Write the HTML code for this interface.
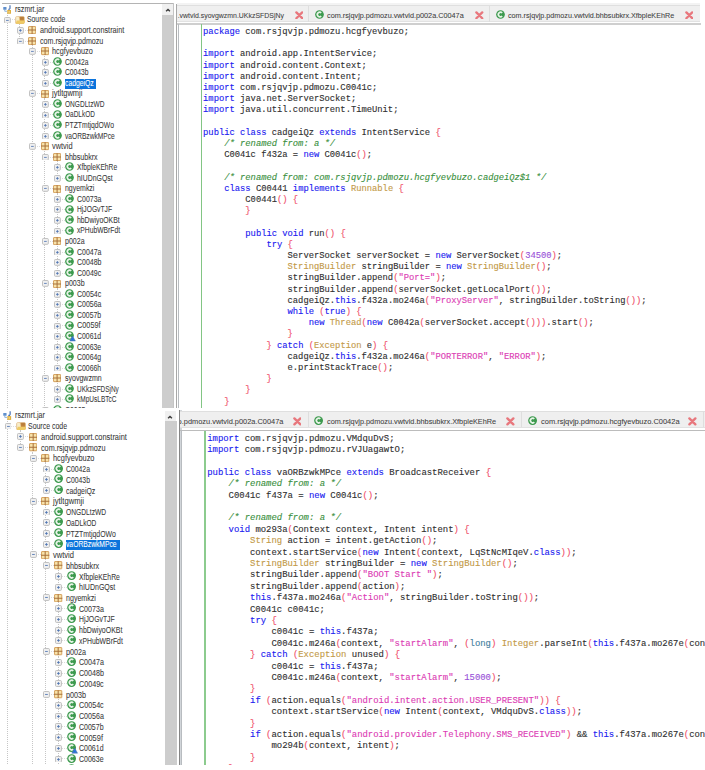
<!DOCTYPE html>
<html><head><meta charset="utf-8"><style>
html,body{margin:0;padding:0;background:#fff}
body{width:705px;height:770px;overflow:hidden;position:relative}
.tt{position:absolute;transform-origin:left;-webkit-text-stroke:0.06px currentColor;font-family:"Liberation Sans",sans-serif;white-space:pre;line-height:10px}
.cl{position:absolute;font-family:"Liberation Mono",monospace;white-space:pre;line-height:11px;color:#303030;-webkit-text-stroke:0.12px currentColor}
i{font-style:italic}
</style></head><body>
<div style="position:absolute;left:0;top:0;width:705px;height:408px;overflow:hidden">
<div style="position:absolute;left:2px;top:3px;width:171px;height:1px;background:#b4b4b4"></div>
<div style="position:absolute;left:6.80px;top:13.40px;width:0;height:1986.60px;border-left:1px dotted #c6c6c6"></div>
<div style="position:absolute;left:10.30px;top:19.45px;width:5.00px;height:0;border-top:1px dotted #dcdcdc"></div>
<div style="position:absolute;left:19.30px;top:23.95px;width:0;height:17.10px;border-left:1px dotted #c6c6c6"></div>
<div style="position:absolute;left:22.80px;top:30.00px;width:5.00px;height:0;border-top:1px dotted #dcdcdc"></div>
<div style="position:absolute;left:22.80px;top:40.55px;width:5.00px;height:0;border-top:1px dotted #dcdcdc"></div>
<div style="position:absolute;left:31.80px;top:45.05px;width:0;height:1954.95px;border-left:1px dotted #c6c6c6"></div>
<div style="position:absolute;left:35.30px;top:51.10px;width:5.00px;height:0;border-top:1px dotted #dcdcdc"></div>
<div style="position:absolute;left:44.30px;top:55.60px;width:0;height:27.65px;border-left:1px dotted #c6c6c6"></div>
<div style="position:absolute;left:47.80px;top:61.65px;width:5.00px;height:0;border-top:1px dotted #dcdcdc"></div>
<div style="position:absolute;left:47.80px;top:72.20px;width:5.00px;height:0;border-top:1px dotted #dcdcdc"></div>
<div style="position:absolute;left:47.80px;top:82.75px;width:5.00px;height:0;border-top:1px dotted #dcdcdc"></div>
<div style="position:absolute;left:35.30px;top:93.30px;width:5.00px;height:0;border-top:1px dotted #dcdcdc"></div>
<div style="position:absolute;left:44.30px;top:97.80px;width:0;height:38.20px;border-left:1px dotted #c6c6c6"></div>
<div style="position:absolute;left:47.80px;top:103.85px;width:5.00px;height:0;border-top:1px dotted #dcdcdc"></div>
<div style="position:absolute;left:47.80px;top:114.40px;width:5.00px;height:0;border-top:1px dotted #dcdcdc"></div>
<div style="position:absolute;left:47.80px;top:124.95px;width:5.00px;height:0;border-top:1px dotted #dcdcdc"></div>
<div style="position:absolute;left:47.80px;top:135.50px;width:5.00px;height:0;border-top:1px dotted #dcdcdc"></div>
<div style="position:absolute;left:35.30px;top:146.05px;width:5.00px;height:0;border-top:1px dotted #dcdcdc"></div>
<div style="position:absolute;left:44.30px;top:150.55px;width:0;height:1849.45px;border-left:1px dotted #c6c6c6"></div>
<div style="position:absolute;left:47.80px;top:156.60px;width:5.00px;height:0;border-top:1px dotted #dcdcdc"></div>
<div style="position:absolute;left:56.80px;top:161.10px;width:0;height:17.10px;border-left:1px dotted #c6c6c6"></div>
<div style="position:absolute;left:60.30px;top:167.15px;width:5.00px;height:0;border-top:1px dotted #dcdcdc"></div>
<div style="position:absolute;left:60.30px;top:177.70px;width:5.00px;height:0;border-top:1px dotted #dcdcdc"></div>
<div style="position:absolute;left:47.80px;top:188.25px;width:5.00px;height:0;border-top:1px dotted #dcdcdc"></div>
<div style="position:absolute;left:56.80px;top:192.75px;width:0;height:38.20px;border-left:1px dotted #c6c6c6"></div>
<div style="position:absolute;left:60.30px;top:198.80px;width:5.00px;height:0;border-top:1px dotted #dcdcdc"></div>
<div style="position:absolute;left:60.30px;top:209.35px;width:5.00px;height:0;border-top:1px dotted #dcdcdc"></div>
<div style="position:absolute;left:60.30px;top:219.90px;width:5.00px;height:0;border-top:1px dotted #dcdcdc"></div>
<div style="position:absolute;left:60.30px;top:230.45px;width:5.00px;height:0;border-top:1px dotted #dcdcdc"></div>
<div style="position:absolute;left:47.80px;top:241.00px;width:5.00px;height:0;border-top:1px dotted #dcdcdc"></div>
<div style="position:absolute;left:56.80px;top:245.50px;width:0;height:27.65px;border-left:1px dotted #c6c6c6"></div>
<div style="position:absolute;left:60.30px;top:251.55px;width:5.00px;height:0;border-top:1px dotted #dcdcdc"></div>
<div style="position:absolute;left:60.30px;top:262.10px;width:5.00px;height:0;border-top:1px dotted #dcdcdc"></div>
<div style="position:absolute;left:60.30px;top:272.65px;width:5.00px;height:0;border-top:1px dotted #dcdcdc"></div>
<div style="position:absolute;left:47.80px;top:283.20px;width:5.00px;height:0;border-top:1px dotted #dcdcdc"></div>
<div style="position:absolute;left:56.80px;top:287.70px;width:0;height:80.40px;border-left:1px dotted #c6c6c6"></div>
<div style="position:absolute;left:60.30px;top:293.75px;width:5.00px;height:0;border-top:1px dotted #dcdcdc"></div>
<div style="position:absolute;left:60.30px;top:304.30px;width:5.00px;height:0;border-top:1px dotted #dcdcdc"></div>
<div style="position:absolute;left:60.30px;top:314.85px;width:5.00px;height:0;border-top:1px dotted #dcdcdc"></div>
<div style="position:absolute;left:60.30px;top:325.40px;width:5.00px;height:0;border-top:1px dotted #dcdcdc"></div>
<div style="position:absolute;left:60.30px;top:335.95px;width:5.00px;height:0;border-top:1px dotted #dcdcdc"></div>
<div style="position:absolute;left:60.30px;top:346.50px;width:5.00px;height:0;border-top:1px dotted #dcdcdc"></div>
<div style="position:absolute;left:60.30px;top:357.05px;width:5.00px;height:0;border-top:1px dotted #dcdcdc"></div>
<div style="position:absolute;left:60.30px;top:367.60px;width:5.00px;height:0;border-top:1px dotted #dcdcdc"></div>
<div style="position:absolute;left:47.80px;top:378.15px;width:5.00px;height:0;border-top:1px dotted #dcdcdc"></div>
<div style="position:absolute;left:56.80px;top:382.65px;width:0;height:17.10px;border-left:1px dotted #c6c6c6"></div>
<div style="position:absolute;left:60.30px;top:388.70px;width:5.00px;height:0;border-top:1px dotted #dcdcdc"></div>
<div style="position:absolute;left:60.30px;top:399.25px;width:5.00px;height:0;border-top:1px dotted #dcdcdc"></div>
<div style="position:absolute;left:47.80px;top:409.80px;width:5.00px;height:0;border-top:1px dotted #dcdcdc"></div>
<div style="position:absolute;left:47.80px;top:420.35px;width:5.00px;height:0;border-top:1px dotted #dcdcdc"></div>
<svg style="position:absolute;left:3.00px;top:4.90px" width="9.00" height="9.00" viewBox="0 0 18 18"><rect x="0.5" y="4" width="6.5" height="5.5" rx="1" fill="#5f8fcc"/><path d="M3.5 9.5 V12.5 H8" stroke="#6a9ad0" stroke-width="1.5" fill="none"/><path d="M14 0.5 V6.5 Q14 9 10.5 8.5" stroke="#3a68b0" stroke-width="2.2" fill="none"/><rect x="8.5" y="10" width="7.5" height="7.5" fill="#e0b040"/><rect x="11" y="12.5" width="2.5" height="2.5" fill="#fbeaa8"/></svg>
<div class="tt" style="left:14.50px;top:3.90px;font-size:8.4px;color:#383838;transform:scaleX(0.8404)">rszmrt.jar</div>
<svg style="position:absolute;left:4.40px;top:16.55px" width="6.80" height="6.80" viewBox="0 0 10 10"><rect x="0.7" y="0.7" width="8.6" height="8.6" rx="1.5" fill="#f0f0f0" stroke="#bdbdbd" stroke-width="1.4"/><path d="M3 5 H7" stroke="#4a70b0" stroke-width="1.2"/></svg>
<svg style="position:absolute;left:15.20px;top:16.05px" width="10.25" height="8.20" viewBox="0 0 20 16"><rect x="1" y="1" width="17.5" height="14" rx="2.5" fill="#cf9445"/><path d="M10 2.5 H17 M10 5 H17 M10 7.5 H17" stroke="#a86c35" stroke-width="1.2"/><path d="M2 2 Q5 1 8.5 2.5 L9.5 14 L2 14 Z" fill="#f8ecc8"/><path d="M3.5 9 L19.8 9 L17.5 15.2 L1 15.2 Z" fill="#efcb66"/></svg>
<div class="tt" style="left:27.00px;top:14.45px;font-size:8.4px;color:#383838;transform:scaleX(0.8149)">Source code</div>
<svg style="position:absolute;left:16.90px;top:27.10px" width="6.80" height="6.80" viewBox="0 0 10 10"><rect x="0.7" y="0.7" width="8.6" height="8.6" rx="1.5" fill="#f0f0f0" stroke="#bdbdbd" stroke-width="1.4"/><path d="M3 5 H7" stroke="#4a70b0" stroke-width="1.2"/><path d="M5 3 V7" stroke="#4a70b0" stroke-width="1.2"/></svg>
<svg style="position:absolute;left:28.20px;top:26.30px" width="8.19" height="8.19" viewBox="0 0 18 18"><rect x="1.2" y="1.2" width="15.6" height="15.6" rx="0.8" fill="#f8e4ac" stroke="#d09850" stroke-width="1.9"/><path d="M9 0.5 V17.5 M0 9 H18" stroke="#a8703a" stroke-width="2.2"/></svg>
<div class="tt" style="left:39.50px;top:25.00px;font-size:8.4px;color:#383838;transform:scaleX(0.8707)">android.support.constraint</div>
<svg style="position:absolute;left:16.90px;top:37.65px" width="6.80" height="6.80" viewBox="0 0 10 10"><rect x="0.7" y="0.7" width="8.6" height="8.6" rx="1.5" fill="#f0f0f0" stroke="#bdbdbd" stroke-width="1.4"/><path d="M3 5 H7" stroke="#4a70b0" stroke-width="1.2"/></svg>
<svg style="position:absolute;left:28.20px;top:36.85px" width="8.19" height="8.19" viewBox="0 0 18 18"><rect x="1.2" y="1.2" width="15.6" height="15.6" rx="0.8" fill="#f8e4ac" stroke="#d09850" stroke-width="1.9"/><path d="M9 0.5 V17.5 M0 9 H18" stroke="#a8703a" stroke-width="2.2"/></svg>
<div class="tt" style="left:39.50px;top:35.55px;font-size:8.4px;color:#383838;transform:scaleX(0.8501)">com.rsjqvjp.pdmozu</div>
<svg style="position:absolute;left:29.40px;top:48.20px" width="6.80" height="6.80" viewBox="0 0 10 10"><rect x="0.7" y="0.7" width="8.6" height="8.6" rx="1.5" fill="#f0f0f0" stroke="#bdbdbd" stroke-width="1.4"/><path d="M3 5 H7" stroke="#4a70b0" stroke-width="1.2"/></svg>
<svg style="position:absolute;left:40.70px;top:47.40px" width="8.19" height="8.19" viewBox="0 0 18 18"><rect x="1.2" y="1.2" width="15.6" height="15.6" rx="0.8" fill="#f8e4ac" stroke="#d09850" stroke-width="1.9"/><path d="M9 0.5 V17.5 M0 9 H18" stroke="#a8703a" stroke-width="2.2"/></svg>
<div class="tt" style="left:52.00px;top:46.10px;font-size:8.4px;color:#383838;transform:scaleX(0.8656)">hcgfyevbuzo</div>
<svg style="position:absolute;left:41.90px;top:58.75px" width="6.80" height="6.80" viewBox="0 0 10 10"><rect x="0.7" y="0.7" width="8.6" height="8.6" rx="1.5" fill="#f0f0f0" stroke="#bdbdbd" stroke-width="1.4"/><path d="M3 5 H7" stroke="#4a70b0" stroke-width="1.2"/><path d="M5 3 V7" stroke="#4a70b0" stroke-width="1.2"/></svg>
<svg style="position:absolute;left:52.90px;top:56.85px" width="9.00" height="9.00" viewBox="0 0 18 18"><circle cx="9" cy="9" r="8.7" fill="#3d9a4e"/><path d="M12.4 5.8 A4.5 4.5 0 1 0 12.4 12.2" stroke="#e8f4e8" stroke-width="3.3" fill="none"/></svg>
<div class="tt" style="left:64.50px;top:56.65px;font-size:8.4px;color:#383838;transform:scaleX(0.8019)">C0042a</div>
<svg style="position:absolute;left:41.90px;top:69.30px" width="6.80" height="6.80" viewBox="0 0 10 10"><rect x="0.7" y="0.7" width="8.6" height="8.6" rx="1.5" fill="#f0f0f0" stroke="#bdbdbd" stroke-width="1.4"/><path d="M3 5 H7" stroke="#4a70b0" stroke-width="1.2"/><path d="M5 3 V7" stroke="#4a70b0" stroke-width="1.2"/></svg>
<svg style="position:absolute;left:52.90px;top:67.40px" width="9.00" height="9.00" viewBox="0 0 18 18"><circle cx="9" cy="9" r="8.7" fill="#3d9a4e"/><path d="M12.4 5.8 A4.5 4.5 0 1 0 12.4 12.2" stroke="#e8f4e8" stroke-width="3.3" fill="none"/></svg>
<div class="tt" style="left:64.50px;top:67.20px;font-size:8.4px;color:#383838;transform:scaleX(0.8019)">C0043b</div>
<svg style="position:absolute;left:41.90px;top:79.85px" width="6.80" height="6.80" viewBox="0 0 10 10"><rect x="0.7" y="0.7" width="8.6" height="8.6" rx="1.5" fill="#f0f0f0" stroke="#bdbdbd" stroke-width="1.4"/><path d="M3 5 H7" stroke="#4a70b0" stroke-width="1.2"/><path d="M5 3 V7" stroke="#4a70b0" stroke-width="1.2"/></svg>
<svg style="position:absolute;left:52.90px;top:77.95px" width="9.00" height="9.00" viewBox="0 0 18 18"><circle cx="9" cy="9" r="8.7" fill="#3d9a4e"/><path d="M12.4 5.8 A4.5 4.5 0 1 0 12.4 12.2" stroke="#e8f4e8" stroke-width="3.3" fill="none"/></svg>
<div style="position:absolute;left:64.70px;top:78.65px;width:31.30px;height:10.20px;background:#0c74dc"></div>
<div class="tt" style="left:64.50px;top:77.75px;font-size:8.4px;color:#fff;transform:scaleX(0.8126)">cadgeiQz</div>
<svg style="position:absolute;left:29.40px;top:90.40px" width="6.80" height="6.80" viewBox="0 0 10 10"><rect x="0.7" y="0.7" width="8.6" height="8.6" rx="1.5" fill="#f0f0f0" stroke="#bdbdbd" stroke-width="1.4"/><path d="M3 5 H7" stroke="#4a70b0" stroke-width="1.2"/></svg>
<svg style="position:absolute;left:40.70px;top:89.60px" width="8.19" height="8.19" viewBox="0 0 18 18"><rect x="1.2" y="1.2" width="15.6" height="15.6" rx="0.8" fill="#f8e4ac" stroke="#d09850" stroke-width="1.9"/><path d="M9 0.5 V17.5 M0 9 H18" stroke="#a8703a" stroke-width="2.2"/></svg>
<div class="tt" style="left:52.00px;top:88.30px;font-size:8.4px;color:#383838;transform:scaleX(0.8943)">jytltgwmji</div>
<svg style="position:absolute;left:41.90px;top:100.95px" width="6.80" height="6.80" viewBox="0 0 10 10"><rect x="0.7" y="0.7" width="8.6" height="8.6" rx="1.5" fill="#f0f0f0" stroke="#bdbdbd" stroke-width="1.4"/><path d="M3 5 H7" stroke="#4a70b0" stroke-width="1.2"/><path d="M5 3 V7" stroke="#4a70b0" stroke-width="1.2"/></svg>
<svg style="position:absolute;left:52.90px;top:99.05px" width="9.00" height="9.00" viewBox="0 0 18 18"><circle cx="9" cy="9" r="8.7" fill="#3d9a4e"/><path d="M12.4 5.8 A4.5 4.5 0 1 0 12.4 12.2" stroke="#e8f4e8" stroke-width="3.3" fill="none"/></svg>
<div class="tt" style="left:64.50px;top:98.85px;font-size:8.4px;color:#383838;transform:scaleX(0.7848)">ONGDLtzWD</div>
<svg style="position:absolute;left:41.90px;top:111.50px" width="6.80" height="6.80" viewBox="0 0 10 10"><rect x="0.7" y="0.7" width="8.6" height="8.6" rx="1.5" fill="#f0f0f0" stroke="#bdbdbd" stroke-width="1.4"/><path d="M3 5 H7" stroke="#4a70b0" stroke-width="1.2"/><path d="M5 3 V7" stroke="#4a70b0" stroke-width="1.2"/></svg>
<svg style="position:absolute;left:52.90px;top:109.60px" width="9.00" height="9.00" viewBox="0 0 18 18"><circle cx="9" cy="9" r="8.7" fill="#3d9a4e"/><path d="M12.4 5.8 A4.5 4.5 0 1 0 12.4 12.2" stroke="#e8f4e8" stroke-width="3.3" fill="none"/></svg>
<div class="tt" style="left:64.50px;top:109.40px;font-size:8.4px;color:#383838;transform:scaleX(0.7724)">OaDLkOD</div>
<svg style="position:absolute;left:41.90px;top:122.05px" width="6.80" height="6.80" viewBox="0 0 10 10"><rect x="0.7" y="0.7" width="8.6" height="8.6" rx="1.5" fill="#f0f0f0" stroke="#bdbdbd" stroke-width="1.4"/><path d="M3 5 H7" stroke="#4a70b0" stroke-width="1.2"/><path d="M5 3 V7" stroke="#4a70b0" stroke-width="1.2"/></svg>
<svg style="position:absolute;left:52.90px;top:120.15px" width="9.00" height="9.00" viewBox="0 0 18 18"><circle cx="9" cy="9" r="8.7" fill="#3d9a4e"/><path d="M12.4 5.8 A4.5 4.5 0 1 0 12.4 12.2" stroke="#e8f4e8" stroke-width="3.3" fill="none"/></svg>
<div class="tt" style="left:64.50px;top:119.95px;font-size:8.4px;color:#383838;transform:scaleX(0.8108)">PTZTmtjqdOWo</div>
<svg style="position:absolute;left:41.90px;top:132.60px" width="6.80" height="6.80" viewBox="0 0 10 10"><rect x="0.7" y="0.7" width="8.6" height="8.6" rx="1.5" fill="#f0f0f0" stroke="#bdbdbd" stroke-width="1.4"/><path d="M3 5 H7" stroke="#4a70b0" stroke-width="1.2"/><path d="M5 3 V7" stroke="#4a70b0" stroke-width="1.2"/></svg>
<svg style="position:absolute;left:52.90px;top:130.70px" width="9.00" height="9.00" viewBox="0 0 18 18"><circle cx="9" cy="9" r="8.7" fill="#3d9a4e"/><path d="M12.4 5.8 A4.5 4.5 0 1 0 12.4 12.2" stroke="#e8f4e8" stroke-width="3.3" fill="none"/></svg>
<div class="tt" style="left:64.50px;top:130.50px;font-size:8.4px;color:#383838;transform:scaleX(0.7916)">vaORBzwkMPce</div>
<svg style="position:absolute;left:29.40px;top:143.15px" width="6.80" height="6.80" viewBox="0 0 10 10"><rect x="0.7" y="0.7" width="8.6" height="8.6" rx="1.5" fill="#f0f0f0" stroke="#bdbdbd" stroke-width="1.4"/><path d="M3 5 H7" stroke="#4a70b0" stroke-width="1.2"/></svg>
<svg style="position:absolute;left:40.70px;top:142.35px" width="8.19" height="8.19" viewBox="0 0 18 18"><rect x="1.2" y="1.2" width="15.6" height="15.6" rx="0.8" fill="#f8e4ac" stroke="#d09850" stroke-width="1.9"/><path d="M9 0.5 V17.5 M0 9 H18" stroke="#a8703a" stroke-width="2.2"/></svg>
<div class="tt" style="left:52.00px;top:141.05px;font-size:8.4px;color:#383838;transform:scaleX(0.8852)">vwtvid</div>
<svg style="position:absolute;left:41.90px;top:153.70px" width="6.80" height="6.80" viewBox="0 0 10 10"><rect x="0.7" y="0.7" width="8.6" height="8.6" rx="1.5" fill="#f0f0f0" stroke="#bdbdbd" stroke-width="1.4"/><path d="M3 5 H7" stroke="#4a70b0" stroke-width="1.2"/></svg>
<svg style="position:absolute;left:53.20px;top:152.90px" width="8.19" height="8.19" viewBox="0 0 18 18"><rect x="1.2" y="1.2" width="15.6" height="15.6" rx="0.8" fill="#f8e4ac" stroke="#d09850" stroke-width="1.9"/><path d="M9 0.5 V17.5 M0 9 H18" stroke="#a8703a" stroke-width="2.2"/></svg>
<div class="tt" style="left:64.50px;top:151.60px;font-size:8.4px;color:#383838;transform:scaleX(0.8440)">bhbsubkrx</div>
<svg style="position:absolute;left:54.40px;top:164.25px" width="6.80" height="6.80" viewBox="0 0 10 10"><rect x="0.7" y="0.7" width="8.6" height="8.6" rx="1.5" fill="#f0f0f0" stroke="#bdbdbd" stroke-width="1.4"/><path d="M3 5 H7" stroke="#4a70b0" stroke-width="1.2"/><path d="M5 3 V7" stroke="#4a70b0" stroke-width="1.2"/></svg>
<svg style="position:absolute;left:65.40px;top:162.35px" width="9.00" height="9.00" viewBox="0 0 18 18"><circle cx="9" cy="9" r="8.7" fill="#3d9a4e"/><path d="M12.4 5.8 A4.5 4.5 0 1 0 12.4 12.2" stroke="#e8f4e8" stroke-width="3.3" fill="none"/></svg>
<div class="tt" style="left:77.00px;top:162.15px;font-size:8.4px;color:#383838;transform:scaleX(0.7980)">XfbpleKEhRe</div>
<svg style="position:absolute;left:54.40px;top:174.80px" width="6.80" height="6.80" viewBox="0 0 10 10"><rect x="0.7" y="0.7" width="8.6" height="8.6" rx="1.5" fill="#f0f0f0" stroke="#bdbdbd" stroke-width="1.4"/><path d="M3 5 H7" stroke="#4a70b0" stroke-width="1.2"/><path d="M5 3 V7" stroke="#4a70b0" stroke-width="1.2"/></svg>
<svg style="position:absolute;left:65.40px;top:172.90px" width="9.00" height="9.00" viewBox="0 0 18 18"><circle cx="9" cy="9" r="8.7" fill="#3d9a4e"/><path d="M12.4 5.8 A4.5 4.5 0 1 0 12.4 12.2" stroke="#e8f4e8" stroke-width="3.3" fill="none"/></svg>
<div class="tt" style="left:77.00px;top:172.70px;font-size:8.4px;color:#383838;transform:scaleX(0.8236)">hIUDnGQst</div>
<svg style="position:absolute;left:41.90px;top:185.35px" width="6.80" height="6.80" viewBox="0 0 10 10"><rect x="0.7" y="0.7" width="8.6" height="8.6" rx="1.5" fill="#f0f0f0" stroke="#bdbdbd" stroke-width="1.4"/><path d="M3 5 H7" stroke="#4a70b0" stroke-width="1.2"/></svg>
<svg style="position:absolute;left:53.20px;top:184.55px" width="8.19" height="8.19" viewBox="0 0 18 18"><rect x="1.2" y="1.2" width="15.6" height="15.6" rx="0.8" fill="#f8e4ac" stroke="#d09850" stroke-width="1.9"/><path d="M9 0.5 V17.5 M0 9 H18" stroke="#a8703a" stroke-width="2.2"/></svg>
<div class="tt" style="left:64.50px;top:183.25px;font-size:8.4px;color:#383838;transform:scaleX(0.8307)">ngyemkzi</div>
<svg style="position:absolute;left:54.40px;top:195.90px" width="6.80" height="6.80" viewBox="0 0 10 10"><rect x="0.7" y="0.7" width="8.6" height="8.6" rx="1.5" fill="#f0f0f0" stroke="#bdbdbd" stroke-width="1.4"/><path d="M3 5 H7" stroke="#4a70b0" stroke-width="1.2"/><path d="M5 3 V7" stroke="#4a70b0" stroke-width="1.2"/></svg>
<svg style="position:absolute;left:65.40px;top:194.00px" width="9.00" height="9.00" viewBox="0 0 18 18"><circle cx="9" cy="9" r="8.7" fill="#3d9a4e"/><path d="M12.4 5.8 A4.5 4.5 0 1 0 12.4 12.2" stroke="#e8f4e8" stroke-width="3.3" fill="none"/></svg>
<div class="tt" style="left:77.00px;top:193.80px;font-size:8.4px;color:#383838;transform:scaleX(0.8322)">C0073a</div>
<svg style="position:absolute;left:54.40px;top:206.45px" width="6.80" height="6.80" viewBox="0 0 10 10"><rect x="0.7" y="0.7" width="8.6" height="8.6" rx="1.5" fill="#f0f0f0" stroke="#bdbdbd" stroke-width="1.4"/><path d="M3 5 H7" stroke="#4a70b0" stroke-width="1.2"/><path d="M5 3 V7" stroke="#4a70b0" stroke-width="1.2"/></svg>
<svg style="position:absolute;left:65.40px;top:204.55px" width="9.00" height="9.00" viewBox="0 0 18 18"><circle cx="9" cy="9" r="8.7" fill="#3d9a4e"/><path d="M12.4 5.8 A4.5 4.5 0 1 0 12.4 12.2" stroke="#e8f4e8" stroke-width="3.3" fill="none"/></svg>
<div class="tt" style="left:77.00px;top:204.35px;font-size:8.4px;color:#383838;transform:scaleX(0.8002)">HjJOGvTJF</div>
<svg style="position:absolute;left:54.40px;top:217.00px" width="6.80" height="6.80" viewBox="0 0 10 10"><rect x="0.7" y="0.7" width="8.6" height="8.6" rx="1.5" fill="#f0f0f0" stroke="#bdbdbd" stroke-width="1.4"/><path d="M3 5 H7" stroke="#4a70b0" stroke-width="1.2"/><path d="M5 3 V7" stroke="#4a70b0" stroke-width="1.2"/></svg>
<svg style="position:absolute;left:65.40px;top:215.10px" width="9.00" height="9.00" viewBox="0 0 18 18"><circle cx="9" cy="9" r="8.7" fill="#3d9a4e"/><path d="M12.4 5.8 A4.5 4.5 0 1 0 12.4 12.2" stroke="#e8f4e8" stroke-width="3.3" fill="none"/></svg>
<div class="tt" style="left:77.00px;top:214.90px;font-size:8.4px;color:#383838;transform:scaleX(0.8181)">hbDwiyoOKBt</div>
<svg style="position:absolute;left:54.40px;top:227.55px" width="6.80" height="6.80" viewBox="0 0 10 10"><rect x="0.7" y="0.7" width="8.6" height="8.6" rx="1.5" fill="#f0f0f0" stroke="#bdbdbd" stroke-width="1.4"/><path d="M3 5 H7" stroke="#4a70b0" stroke-width="1.2"/><path d="M5 3 V7" stroke="#4a70b0" stroke-width="1.2"/></svg>
<svg style="position:absolute;left:65.40px;top:225.65px" width="9.00" height="9.00" viewBox="0 0 18 18"><circle cx="9" cy="9" r="8.7" fill="#3d9a4e"/><path d="M12.4 5.8 A4.5 4.5 0 1 0 12.4 12.2" stroke="#e8f4e8" stroke-width="3.3" fill="none"/></svg>
<div class="tt" style="left:77.00px;top:225.45px;font-size:8.4px;color:#383838;transform:scaleX(0.8046)">xPHubWBrFdt</div>
<svg style="position:absolute;left:41.90px;top:238.10px" width="6.80" height="6.80" viewBox="0 0 10 10"><rect x="0.7" y="0.7" width="8.6" height="8.6" rx="1.5" fill="#f0f0f0" stroke="#bdbdbd" stroke-width="1.4"/><path d="M3 5 H7" stroke="#4a70b0" stroke-width="1.2"/></svg>
<svg style="position:absolute;left:53.20px;top:237.30px" width="8.19" height="8.19" viewBox="0 0 18 18"><rect x="1.2" y="1.2" width="15.6" height="15.6" rx="0.8" fill="#f8e4ac" stroke="#d09850" stroke-width="1.9"/><path d="M9 0.5 V17.5 M0 9 H18" stroke="#a8703a" stroke-width="2.2"/></svg>
<div class="tt" style="left:64.50px;top:236.00px;font-size:8.4px;color:#383838;transform:scaleX(0.8421)">p002a</div>
<svg style="position:absolute;left:54.40px;top:248.65px" width="6.80" height="6.80" viewBox="0 0 10 10"><rect x="0.7" y="0.7" width="8.6" height="8.6" rx="1.5" fill="#f0f0f0" stroke="#bdbdbd" stroke-width="1.4"/><path d="M3 5 H7" stroke="#4a70b0" stroke-width="1.2"/><path d="M5 3 V7" stroke="#4a70b0" stroke-width="1.2"/></svg>
<svg style="position:absolute;left:65.40px;top:246.75px" width="9.00" height="9.00" viewBox="0 0 18 18"><circle cx="9" cy="9" r="8.7" fill="#3d9a4e"/><path d="M12.4 5.8 A4.5 4.5 0 1 0 12.4 12.2" stroke="#e8f4e8" stroke-width="3.3" fill="none"/></svg>
<div class="tt" style="left:77.00px;top:246.55px;font-size:8.4px;color:#383838;transform:scaleX(0.8322)">C0047a</div>
<svg style="position:absolute;left:54.40px;top:259.20px" width="6.80" height="6.80" viewBox="0 0 10 10"><rect x="0.7" y="0.7" width="8.6" height="8.6" rx="1.5" fill="#f0f0f0" stroke="#bdbdbd" stroke-width="1.4"/><path d="M3 5 H7" stroke="#4a70b0" stroke-width="1.2"/><path d="M5 3 V7" stroke="#4a70b0" stroke-width="1.2"/></svg>
<svg style="position:absolute;left:65.40px;top:257.30px" width="9.00" height="9.00" viewBox="0 0 18 18"><circle cx="9" cy="9" r="8.7" fill="#3d9a4e"/><path d="M12.4 5.8 A4.5 4.5 0 1 0 12.4 12.2" stroke="#e8f4e8" stroke-width="3.3" fill="none"/></svg>
<div class="tt" style="left:77.00px;top:257.10px;font-size:8.4px;color:#383838;transform:scaleX(0.8322)">C0048b</div>
<svg style="position:absolute;left:54.40px;top:269.75px" width="6.80" height="6.80" viewBox="0 0 10 10"><rect x="0.7" y="0.7" width="8.6" height="8.6" rx="1.5" fill="#f0f0f0" stroke="#bdbdbd" stroke-width="1.4"/><path d="M3 5 H7" stroke="#4a70b0" stroke-width="1.2"/><path d="M5 3 V7" stroke="#4a70b0" stroke-width="1.2"/></svg>
<svg style="position:absolute;left:65.40px;top:267.85px" width="9.00" height="9.00" viewBox="0 0 18 18"><circle cx="9" cy="9" r="8.7" fill="#3d9a4e"/><path d="M12.4 5.8 A4.5 4.5 0 1 0 12.4 12.2" stroke="#e8f4e8" stroke-width="3.3" fill="none"/></svg>
<div class="tt" style="left:77.00px;top:267.65px;font-size:8.4px;color:#383838;transform:scaleX(0.8403)">C0049c</div>
<svg style="position:absolute;left:41.90px;top:280.30px" width="6.80" height="6.80" viewBox="0 0 10 10"><rect x="0.7" y="0.7" width="8.6" height="8.6" rx="1.5" fill="#f0f0f0" stroke="#bdbdbd" stroke-width="1.4"/><path d="M3 5 H7" stroke="#4a70b0" stroke-width="1.2"/></svg>
<svg style="position:absolute;left:53.20px;top:279.50px" width="8.19" height="8.19" viewBox="0 0 18 18"><rect x="1.2" y="1.2" width="15.6" height="15.6" rx="0.8" fill="#f8e4ac" stroke="#d09850" stroke-width="1.9"/><path d="M9 0.5 V17.5 M0 9 H18" stroke="#a8703a" stroke-width="2.2"/></svg>
<div class="tt" style="left:64.50px;top:278.20px;font-size:8.4px;color:#383838;transform:scaleX(0.8421)">p003b</div>
<svg style="position:absolute;left:54.40px;top:290.85px" width="6.80" height="6.80" viewBox="0 0 10 10"><rect x="0.7" y="0.7" width="8.6" height="8.6" rx="1.5" fill="#f0f0f0" stroke="#bdbdbd" stroke-width="1.4"/><path d="M3 5 H7" stroke="#4a70b0" stroke-width="1.2"/><path d="M5 3 V7" stroke="#4a70b0" stroke-width="1.2"/></svg>
<svg style="position:absolute;left:65.40px;top:288.95px" width="9.00" height="9.00" viewBox="0 0 18 18"><circle cx="9" cy="9" r="8.7" fill="#3d9a4e"/><path d="M12.4 5.8 A4.5 4.5 0 1 0 12.4 12.2" stroke="#e8f4e8" stroke-width="3.3" fill="none"/></svg>
<div class="tt" style="left:77.00px;top:288.75px;font-size:8.4px;color:#383838;transform:scaleX(0.8403)">C0054c</div>
<svg style="position:absolute;left:54.40px;top:301.40px" width="6.80" height="6.80" viewBox="0 0 10 10"><rect x="0.7" y="0.7" width="8.6" height="8.6" rx="1.5" fill="#f0f0f0" stroke="#bdbdbd" stroke-width="1.4"/><path d="M3 5 H7" stroke="#4a70b0" stroke-width="1.2"/><path d="M5 3 V7" stroke="#4a70b0" stroke-width="1.2"/></svg>
<svg style="position:absolute;left:65.40px;top:299.50px" width="9.00" height="9.00" viewBox="0 0 18 18"><circle cx="9" cy="9" r="8.7" fill="#3d9a4e"/><path d="M12.4 5.8 A4.5 4.5 0 1 0 12.4 12.2" stroke="#e8f4e8" stroke-width="3.3" fill="none"/></svg>
<div class="tt" style="left:77.00px;top:299.30px;font-size:8.4px;color:#383838;transform:scaleX(0.8322)">C0056a</div>
<svg style="position:absolute;left:54.40px;top:311.95px" width="6.80" height="6.80" viewBox="0 0 10 10"><rect x="0.7" y="0.7" width="8.6" height="8.6" rx="1.5" fill="#f0f0f0" stroke="#bdbdbd" stroke-width="1.4"/><path d="M3 5 H7" stroke="#4a70b0" stroke-width="1.2"/><path d="M5 3 V7" stroke="#4a70b0" stroke-width="1.2"/></svg>
<svg style="position:absolute;left:65.40px;top:310.05px" width="9.00" height="9.00" viewBox="0 0 18 18"><circle cx="9" cy="9" r="8.7" fill="#3d9a4e"/><path d="M12.4 5.8 A4.5 4.5 0 1 0 12.4 12.2" stroke="#e8f4e8" stroke-width="3.3" fill="none"/></svg>
<div class="tt" style="left:77.00px;top:309.85px;font-size:8.4px;color:#383838;transform:scaleX(0.8221)">C0057b</div>
<svg style="position:absolute;left:54.40px;top:322.50px" width="6.80" height="6.80" viewBox="0 0 10 10"><rect x="0.7" y="0.7" width="8.6" height="8.6" rx="1.5" fill="#f0f0f0" stroke="#bdbdbd" stroke-width="1.4"/><path d="M3 5 H7" stroke="#4a70b0" stroke-width="1.2"/><path d="M5 3 V7" stroke="#4a70b0" stroke-width="1.2"/></svg>
<svg style="position:absolute;left:65.40px;top:320.60px" width="9.00" height="9.00" viewBox="0 0 18 18"><circle cx="9" cy="9" r="8.7" fill="#3d9a4e"/><path d="M12.4 5.8 A4.5 4.5 0 1 0 12.4 12.2" stroke="#e8f4e8" stroke-width="3.3" fill="none"/></svg>
<div class="tt" style="left:77.00px;top:320.40px;font-size:8.4px;color:#383838;transform:scaleX(0.8707)">C0059f</div>
<svg style="position:absolute;left:54.40px;top:333.05px" width="6.80" height="6.80" viewBox="0 0 10 10"><rect x="0.7" y="0.7" width="8.6" height="8.6" rx="1.5" fill="#f0f0f0" stroke="#bdbdbd" stroke-width="1.4"/><path d="M3 5 H7" stroke="#4a70b0" stroke-width="1.2"/><path d="M5 3 V7" stroke="#4a70b0" stroke-width="1.2"/></svg>
<svg style="position:absolute;left:65.40px;top:331.15px;overflow:visible" width="9.00" height="9.00" viewBox="0 0 18 18"><circle cx="9" cy="9" r="8.7" fill="#3d9a4e"/><path d="M12.4 5.8 A4.5 4.5 0 1 0 12.4 12.2" stroke="#e8f4e8" stroke-width="3.3" fill="none"/><path d="M9.5 20 L15.2 10 L20.8 20 Z" fill="#3f7acc" stroke="#2f62b0" stroke-width="0.8"/><circle cx="15.2" cy="16.3" r="1.6" fill="#1a6ff0"/></svg>
<div class="tt" style="left:77.00px;top:330.95px;font-size:8.4px;color:#383838;transform:scaleX(0.8221)">C0061d</div>
<svg style="position:absolute;left:54.40px;top:343.60px" width="6.80" height="6.80" viewBox="0 0 10 10"><rect x="0.7" y="0.7" width="8.6" height="8.6" rx="1.5" fill="#f0f0f0" stroke="#bdbdbd" stroke-width="1.4"/><path d="M3 5 H7" stroke="#4a70b0" stroke-width="1.2"/><path d="M5 3 V7" stroke="#4a70b0" stroke-width="1.2"/></svg>
<svg style="position:absolute;left:65.40px;top:341.70px" width="9.00" height="9.00" viewBox="0 0 18 18"><circle cx="9" cy="9" r="8.7" fill="#3d9a4e"/><path d="M12.4 5.8 A4.5 4.5 0 1 0 12.4 12.2" stroke="#e8f4e8" stroke-width="3.3" fill="none"/></svg>
<div class="tt" style="left:77.00px;top:341.50px;font-size:8.4px;color:#383838;transform:scaleX(0.8221)">C0063e</div>
<svg style="position:absolute;left:54.40px;top:354.15px" width="6.80" height="6.80" viewBox="0 0 10 10"><rect x="0.7" y="0.7" width="8.6" height="8.6" rx="1.5" fill="#f0f0f0" stroke="#bdbdbd" stroke-width="1.4"/><path d="M3 5 H7" stroke="#4a70b0" stroke-width="1.2"/><path d="M5 3 V7" stroke="#4a70b0" stroke-width="1.2"/></svg>
<svg style="position:absolute;left:65.40px;top:352.25px" width="9.00" height="9.00" viewBox="0 0 18 18"><circle cx="9" cy="9" r="8.7" fill="#3d9a4e"/><path d="M12.4 5.8 A4.5 4.5 0 1 0 12.4 12.2" stroke="#e8f4e8" stroke-width="3.3" fill="none"/></svg>
<div class="tt" style="left:77.00px;top:352.05px;font-size:8.4px;color:#383838;transform:scaleX(0.8221)">C0064g</div>
<svg style="position:absolute;left:54.40px;top:364.70px" width="6.80" height="6.80" viewBox="0 0 10 10"><rect x="0.7" y="0.7" width="8.6" height="8.6" rx="1.5" fill="#f0f0f0" stroke="#bdbdbd" stroke-width="1.4"/><path d="M3 5 H7" stroke="#4a70b0" stroke-width="1.2"/><path d="M5 3 V7" stroke="#4a70b0" stroke-width="1.2"/></svg>
<svg style="position:absolute;left:65.40px;top:362.80px" width="9.00" height="9.00" viewBox="0 0 18 18"><circle cx="9" cy="9" r="8.7" fill="#3d9a4e"/><path d="M12.4 5.8 A4.5 4.5 0 1 0 12.4 12.2" stroke="#e8f4e8" stroke-width="3.3" fill="none"/></svg>
<div class="tt" style="left:77.00px;top:362.60px;font-size:8.4px;color:#383838;transform:scaleX(0.8221)">C0066h</div>
<svg style="position:absolute;left:41.90px;top:375.25px" width="6.80" height="6.80" viewBox="0 0 10 10"><rect x="0.7" y="0.7" width="8.6" height="8.6" rx="1.5" fill="#f0f0f0" stroke="#bdbdbd" stroke-width="1.4"/><path d="M3 5 H7" stroke="#4a70b0" stroke-width="1.2"/></svg>
<svg style="position:absolute;left:53.20px;top:374.45px" width="8.19" height="8.19" viewBox="0 0 18 18"><rect x="1.2" y="1.2" width="15.6" height="15.6" rx="0.8" fill="#f8e4ac" stroke="#d09850" stroke-width="1.9"/><path d="M9 0.5 V17.5 M0 9 H18" stroke="#a8703a" stroke-width="2.2"/></svg>
<div class="tt" style="left:64.50px;top:373.15px;font-size:8.4px;color:#383838;transform:scaleX(0.8392)">syovgwzmn</div>
<svg style="position:absolute;left:54.40px;top:385.80px" width="6.80" height="6.80" viewBox="0 0 10 10"><rect x="0.7" y="0.7" width="8.6" height="8.6" rx="1.5" fill="#f0f0f0" stroke="#bdbdbd" stroke-width="1.4"/><path d="M3 5 H7" stroke="#4a70b0" stroke-width="1.2"/><path d="M5 3 V7" stroke="#4a70b0" stroke-width="1.2"/></svg>
<svg style="position:absolute;left:65.40px;top:383.90px" width="9.00" height="9.00" viewBox="0 0 18 18"><circle cx="9" cy="9" r="8.7" fill="#3d9a4e"/><path d="M12.4 5.8 A4.5 4.5 0 1 0 12.4 12.2" stroke="#e8f4e8" stroke-width="3.3" fill="none"/></svg>
<div class="tt" style="left:77.00px;top:383.70px;font-size:8.4px;color:#383838;transform:scaleX(0.7674)">UKkzSFDSjNy</div>
<svg style="position:absolute;left:54.40px;top:396.35px" width="6.80" height="6.80" viewBox="0 0 10 10"><rect x="0.7" y="0.7" width="8.6" height="8.6" rx="1.5" fill="#f0f0f0" stroke="#bdbdbd" stroke-width="1.4"/><path d="M3 5 H7" stroke="#4a70b0" stroke-width="1.2"/><path d="M5 3 V7" stroke="#4a70b0" stroke-width="1.2"/></svg>
<svg style="position:absolute;left:65.40px;top:394.45px" width="9.00" height="9.00" viewBox="0 0 18 18"><circle cx="9" cy="9" r="8.7" fill="#3d9a4e"/><path d="M12.4 5.8 A4.5 4.5 0 1 0 12.4 12.2" stroke="#e8f4e8" stroke-width="3.3" fill="none"/></svg>
<div class="tt" style="left:77.00px;top:394.25px;font-size:8.4px;color:#383838;transform:scaleX(0.7795)">kMpUsLBTcC</div>
<svg style="position:absolute;left:41.90px;top:406.90px" width="6.80" height="6.80" viewBox="0 0 10 10"><rect x="0.7" y="0.7" width="8.6" height="8.6" rx="1.5" fill="#f0f0f0" stroke="#bdbdbd" stroke-width="1.4"/><path d="M3 5 H7" stroke="#4a70b0" stroke-width="1.2"/><path d="M5 3 V7" stroke="#4a70b0" stroke-width="1.2"/></svg>
<svg style="position:absolute;left:52.90px;top:405.00px" width="9.00" height="9.00" viewBox="0 0 18 18"><circle cx="9" cy="9" r="8.7" fill="#3d9a4e"/><path d="M12.4 5.8 A4.5 4.5 0 1 0 12.4 12.2" stroke="#e8f4e8" stroke-width="3.3" fill="none"/></svg>
<div class="tt" style="left:64.50px;top:404.80px;font-size:8.4px;color:#383838;transform:scaleX(0.8221)">C0065a</div>
<svg style="position:absolute;left:41.90px;top:417.45px" width="6.80" height="6.80" viewBox="0 0 10 10"><rect x="0.7" y="0.7" width="8.6" height="8.6" rx="1.5" fill="#f0f0f0" stroke="#bdbdbd" stroke-width="1.4"/><path d="M3 5 H7" stroke="#4a70b0" stroke-width="1.2"/><path d="M5 3 V7" stroke="#4a70b0" stroke-width="1.2"/></svg>
<svg style="position:absolute;left:52.90px;top:415.55px" width="9.00" height="9.00" viewBox="0 0 18 18"><circle cx="9" cy="9" r="8.7" fill="#3d9a4e"/><path d="M12.4 5.8 A4.5 4.5 0 1 0 12.4 12.2" stroke="#e8f4e8" stroke-width="3.3" fill="none"/></svg>
<div class="tt" style="left:64.50px;top:415.35px;font-size:8.4px;color:#383838;transform:scaleX(0.8221)">C0066b</div>
<div style="position:absolute;left:162px;top:4px;width:11px;height:11px;background:#f0f0f0"></div>
<svg style="position:absolute;left:164.50px;top:7.00px" width="6" height="6" viewBox="0 0 10 10"><path d="M1.8 7.2 L5 4 L8.2 7.2" stroke="#3c3c3c" stroke-width="2.3" fill="none"/></svg>
<div style="position:absolute;left:162px;top:15px;width:11.5px;height:400px;background:#cdcdcd"></div>
<div style="position:absolute;left:173px;top:3px;width:1px;height:410px;background:#c4c4c4"></div>
<div style="position:absolute;left:175.5px;top:3.5px;width:1.5px;height:410px;background:#a8a8a8"></div>
<div style="position:absolute;left:177px;top:3px;width:523px;height:2px;background:#f3f3f3"></div>
<div style="position:absolute;left:177px;top:5px;width:523px;height:1px;background:#dfdfdf"></div>
<div style="position:absolute;left:177px;top:6px;width:523px;height:15.3px;background:#efefef"></div>
<div style="position:absolute;left:177px;top:21.3px;width:523px;height:0.6px;background:#e2e2e2"></div>
<div style="position:absolute;left:177px;top:23px;width:524px;height:1.6px;background:#cfcfcf"></div>
<div style="position:absolute;left:177px;top:0px;width:523px;height:24px;overflow:hidden"><div style="position:absolute;left:-177px;top:0px;width:705px;height:770px"><div class="tt" style="right:421.50px;top:10.50px;font-size:7.7px;color:#404040;transform:scaleX(0.9014);transform-origin:right">.vwtvid.syovgwzmn.UKkzSFDSjNy</div>
<svg style="position:absolute;left:294.70px;top:10.80px" width="8.60" height="8.60" viewBox="0 0 10 10"><path d="M1.6 1.6 L8.4 8.4 M8.4 1.6 L1.6 8.4" stroke="#e8777d" stroke-width="2.7" stroke-linecap="round"/></svg>
<div style="position:absolute;left:307.90px;top:6.00px;width:1px;height:15.50px;background:#dedede"></div>
<svg style="position:absolute;left:314.90px;top:9.70px" width="9.00" height="9.00" viewBox="0 0 18 18"><circle cx="9" cy="9" r="8.7" fill="#3d9a4e"/><path d="M12.4 5.8 A4.5 4.5 0 1 0 12.4 12.2" stroke="#e8f4e8" stroke-width="3.3" fill="none"/></svg>
<div class="tt" style="left:327.40px;top:10.50px;font-size:7.7px;color:#404040;transform:scaleX(0.9464)">com.rsjqvjp.pdmozu.vwtvid.p002a.C0047a</div>
<svg style="position:absolute;left:475.00px;top:10.80px" width="8.60" height="8.60" viewBox="0 0 10 10"><path d="M1.6 1.6 L8.4 8.4 M8.4 1.6 L1.6 8.4" stroke="#e8777d" stroke-width="2.7" stroke-linecap="round"/></svg>
<div style="position:absolute;left:488.90px;top:6.00px;width:1px;height:15.50px;background:#dedede"></div>
<svg style="position:absolute;left:495.90px;top:9.70px" width="9.00" height="9.00" viewBox="0 0 18 18"><circle cx="9" cy="9" r="8.7" fill="#3d9a4e"/><path d="M12.4 5.8 A4.5 4.5 0 1 0 12.4 12.2" stroke="#e8f4e8" stroke-width="3.3" fill="none"/></svg>
<div class="tt" style="left:507.70px;top:10.50px;font-size:7.7px;color:#404040;transform:scaleX(0.9347)">com.rsjqvjp.pdmozu.vwtvid.bhbsubkrx.XfbpleKEhRe</div>
<svg style="position:absolute;left:684.50px;top:10.80px" width="8.60" height="8.60" viewBox="0 0 10 10"><path d="M1.6 1.6 L8.4 8.4 M8.4 1.6 L1.6 8.4" stroke="#e8777d" stroke-width="2.7" stroke-linecap="round"/></svg>
<div style="position:absolute;left:700.00px;top:6.00px;width:1px;height:15.50px;background:#dedede"></div></div></div>
<div style="position:absolute;left:177.8px;top:24px;width:1px;height:400px;background:#b8bcc0"></div>
<div style="position:absolute;left:200.9px;top:24.4px;width:1.4px;height:400px;background:#82c584"></div>
<div class="cl" style="top:26.90px;left:203.10px;font-size:8.8px;letter-spacing:0.000px"><span style="color:#2020f0">package</span> com.rsjqvjp.pdmozu.hcgfyevbuzo;</div>
<div class="cl" style="top:38.10px;left:203.10px;font-size:8.8px;letter-spacing:0.000px"></div>
<div class="cl" style="top:49.30px;left:203.10px;font-size:8.8px;letter-spacing:0.000px"><span style="color:#2020f0">import</span> android.app.IntentService;</div>
<div class="cl" style="top:60.50px;left:203.10px;font-size:8.8px;letter-spacing:0.000px"><span style="color:#2020f0">import</span> android.content.Context;</div>
<div class="cl" style="top:71.70px;left:203.10px;font-size:8.8px;letter-spacing:0.000px"><span style="color:#2020f0">import</span> android.content.Intent;</div>
<div class="cl" style="top:82.90px;left:203.10px;font-size:8.8px;letter-spacing:0.000px"><span style="color:#2020f0">import</span> com.rsjqvjp.pdmozu.C0041c;</div>
<div class="cl" style="top:94.10px;left:203.10px;font-size:8.8px;letter-spacing:0.000px"><span style="color:#2020f0">import</span> java.net.ServerSocket;</div>
<div class="cl" style="top:105.30px;left:203.10px;font-size:8.8px;letter-spacing:0.000px"><span style="color:#2020f0">import</span> java.util.concurrent.TimeUnit;</div>
<div class="cl" style="top:116.50px;left:203.10px;font-size:8.8px;letter-spacing:0.000px"></div>
<div class="cl" style="top:127.70px;left:203.10px;font-size:8.8px;letter-spacing:0.000px"><span style="color:#2020f0">public</span> <span style="color:#2020f0">class</span> cadgeiQz <span style="color:#2020f0">extends</span> IntentService <span style="color:#f0506a">{</span></div>
<div class="cl" style="top:138.90px;left:203.10px;font-size:8.8px;letter-spacing:0.000px">    <i style="color:#3a9040">/* renamed from: a */</i></div>
<div class="cl" style="top:150.10px;left:203.10px;font-size:8.8px;letter-spacing:0.000px">    C0041c f432a = <span style="color:#2020f0">new</span> C0041c<span style="color:#f0506a">(</span><span style="color:#f0506a">)</span>;</div>
<div class="cl" style="top:161.30px;left:203.10px;font-size:8.8px;letter-spacing:0.000px"></div>
<div class="cl" style="top:172.50px;left:203.10px;font-size:8.8px;letter-spacing:0.000px">    <i style="color:#3a9040">/* renamed from: com.rsjqvjp.pdmozu.hcgfyevbuzo.cadgeiQz$1 */</i></div>
<div class="cl" style="top:183.70px;left:203.10px;font-size:8.8px;letter-spacing:0.000px">    <span style="color:#2020f0">class</span> C00441 <span style="color:#2020f0">implements</span> <span style="color:#c39a48">Runnable</span> <span style="color:#f0506a">{</span></div>
<div class="cl" style="top:194.90px;left:203.10px;font-size:8.8px;letter-spacing:0.000px">        C00441<span style="color:#f0506a">(</span><span style="color:#f0506a">)</span> <span style="color:#f0506a">{</span></div>
<div class="cl" style="top:206.10px;left:203.10px;font-size:8.8px;letter-spacing:0.000px">        <span style="color:#f0506a">}</span></div>
<div class="cl" style="top:217.30px;left:203.10px;font-size:8.8px;letter-spacing:0.000px"></div>
<div class="cl" style="top:228.50px;left:203.10px;font-size:8.8px;letter-spacing:0.000px">        <span style="color:#2020f0">public</span> <span style="color:#2020f0">void</span> run<span style="color:#f0506a">(</span><span style="color:#f0506a">)</span> <span style="color:#f0506a">{</span></div>
<div class="cl" style="top:239.70px;left:203.10px;font-size:8.8px;letter-spacing:0.000px">            <span style="color:#2020f0">try</span> <span style="color:#f0506a">{</span></div>
<div class="cl" style="top:250.90px;left:203.10px;font-size:8.8px;letter-spacing:0.000px">                ServerSocket serverSocket = <span style="color:#2020f0">new</span> ServerSocket<span style="color:#f0506a">(</span><span style="color:#9a52d8">34500</span><span style="color:#f0506a">)</span>;</div>
<div class="cl" style="top:262.10px;left:203.10px;font-size:8.8px;letter-spacing:0.000px">                <span style="color:#c39a48">StringBuilder</span> stringBuilder = <span style="color:#2020f0">new</span> <span style="color:#c39a48">StringBuilder</span><span style="color:#f0506a">(</span><span style="color:#f0506a">)</span>;</div>
<div class="cl" style="top:273.30px;left:203.10px;font-size:8.8px;letter-spacing:0.000px">                stringBuilder.append<span style="color:#f0506a">(</span><span style="color:#dc3cb4">"Port="</span><span style="color:#f0506a">)</span>;</div>
<div class="cl" style="top:284.50px;left:203.10px;font-size:8.8px;letter-spacing:0.000px">                stringBuilder.append<span style="color:#f0506a">(</span>serverSocket.getLocalPort<span style="color:#f0506a">(</span><span style="color:#f0506a">)</span><span style="color:#f0506a">)</span>;</div>
<div class="cl" style="top:295.70px;left:203.10px;font-size:8.8px;letter-spacing:0.000px">                cadgeiQz.<span style="color:#2020f0">this</span>.f432a.mo246a<span style="color:#f0506a">(</span><span style="color:#dc3cb4">"ProxyServer"</span>, stringBuilder.toString<span style="color:#f0506a">(</span><span style="color:#f0506a">)</span><span style="color:#f0506a">)</span>;</div>
<div class="cl" style="top:306.90px;left:203.10px;font-size:8.8px;letter-spacing:0.000px">                <span style="color:#2020f0">while</span> <span style="color:#f0506a">(</span><span style="color:#2020f0">true</span><span style="color:#f0506a">)</span> <span style="color:#f0506a">{</span></div>
<div class="cl" style="top:318.10px;left:203.10px;font-size:8.8px;letter-spacing:0.000px">                    <span style="color:#2020f0">new</span> <span style="color:#c39a48">Thread</span><span style="color:#f0506a">(</span><span style="color:#2020f0">new</span> C0042a<span style="color:#f0506a">(</span>serverSocket.accept<span style="color:#f0506a">(</span><span style="color:#f0506a">)</span><span style="color:#f0506a">)</span><span style="color:#f0506a">)</span>.start<span style="color:#f0506a">(</span><span style="color:#f0506a">)</span>;</div>
<div class="cl" style="top:329.30px;left:203.10px;font-size:8.8px;letter-spacing:0.000px">                <span style="color:#f0506a">}</span></div>
<div class="cl" style="top:340.50px;left:203.10px;font-size:8.8px;letter-spacing:0.000px">            <span style="color:#f0506a">}</span> <span style="color:#2020f0">catch</span> <span style="color:#f0506a">(</span><span style="color:#c39a48">Exception</span> e<span style="color:#f0506a">)</span> <span style="color:#f0506a">{</span></div>
<div class="cl" style="top:351.70px;left:203.10px;font-size:8.8px;letter-spacing:0.000px">                cadgeiQz.<span style="color:#2020f0">this</span>.f432a.mo246a<span style="color:#f0506a">(</span><span style="color:#dc3cb4">"PORTERROR"</span>, <span style="color:#dc3cb4">"ERROR"</span><span style="color:#f0506a">)</span>;</div>
<div class="cl" style="top:362.90px;left:203.10px;font-size:8.8px;letter-spacing:0.000px">                e.printStackTrace<span style="color:#f0506a">(</span><span style="color:#f0506a">)</span>;</div>
<div class="cl" style="top:374.10px;left:203.10px;font-size:8.8px;letter-spacing:0.000px">            <span style="color:#f0506a">}</span></div>
<div class="cl" style="top:385.30px;left:203.10px;font-size:8.8px;letter-spacing:0.000px">        <span style="color:#f0506a">}</span></div>
<div class="cl" style="top:396.50px;left:203.10px;font-size:8.8px;letter-spacing:0.000px">    <span style="color:#f0506a">}</span></div>
</div>
<div style="position:absolute;left:0;top:408px;width:705px;height:357px;overflow:hidden">
<div style="position:absolute;left:0;top:-408px;width:705px;height:770px">
<div style="position:absolute;left:7.00px;top:419.37px;width:0;height:1580.63px;border-left:1px dotted #c6c6c6"></div>
<div style="position:absolute;left:10.55px;top:425.54px;width:5.09px;height:0;border-top:1px dotted #dcdcdc"></div>
<div style="position:absolute;left:19.73px;top:430.11px;width:0;height:17.41px;border-left:1px dotted #c6c6c6"></div>
<div style="position:absolute;left:23.28px;top:436.28px;width:5.09px;height:0;border-top:1px dotted #dcdcdc"></div>
<div style="position:absolute;left:23.28px;top:447.02px;width:5.09px;height:0;border-top:1px dotted #dcdcdc"></div>
<div style="position:absolute;left:32.46px;top:451.59px;width:0;height:1548.41px;border-left:1px dotted #c6c6c6"></div>
<div style="position:absolute;left:36.01px;top:457.76px;width:5.09px;height:0;border-top:1px dotted #dcdcdc"></div>
<div style="position:absolute;left:45.19px;top:462.33px;width:0;height:28.15px;border-left:1px dotted #c6c6c6"></div>
<div style="position:absolute;left:48.74px;top:468.50px;width:5.09px;height:0;border-top:1px dotted #dcdcdc"></div>
<div style="position:absolute;left:48.74px;top:479.24px;width:5.09px;height:0;border-top:1px dotted #dcdcdc"></div>
<div style="position:absolute;left:48.74px;top:489.98px;width:5.09px;height:0;border-top:1px dotted #dcdcdc"></div>
<div style="position:absolute;left:36.01px;top:500.72px;width:5.09px;height:0;border-top:1px dotted #dcdcdc"></div>
<div style="position:absolute;left:45.19px;top:505.29px;width:0;height:38.89px;border-left:1px dotted #c6c6c6"></div>
<div style="position:absolute;left:48.74px;top:511.46px;width:5.09px;height:0;border-top:1px dotted #dcdcdc"></div>
<div style="position:absolute;left:48.74px;top:522.20px;width:5.09px;height:0;border-top:1px dotted #dcdcdc"></div>
<div style="position:absolute;left:48.74px;top:532.94px;width:5.09px;height:0;border-top:1px dotted #dcdcdc"></div>
<div style="position:absolute;left:48.74px;top:543.68px;width:5.09px;height:0;border-top:1px dotted #dcdcdc"></div>
<div style="position:absolute;left:36.01px;top:554.42px;width:5.09px;height:0;border-top:1px dotted #dcdcdc"></div>
<div style="position:absolute;left:45.19px;top:558.99px;width:0;height:1441.01px;border-left:1px dotted #c6c6c6"></div>
<div style="position:absolute;left:48.74px;top:565.16px;width:5.09px;height:0;border-top:1px dotted #dcdcdc"></div>
<div style="position:absolute;left:57.92px;top:569.73px;width:0;height:17.41px;border-left:1px dotted #c6c6c6"></div>
<div style="position:absolute;left:61.47px;top:575.90px;width:5.09px;height:0;border-top:1px dotted #dcdcdc"></div>
<div style="position:absolute;left:61.47px;top:586.64px;width:5.09px;height:0;border-top:1px dotted #dcdcdc"></div>
<div style="position:absolute;left:48.74px;top:597.38px;width:5.09px;height:0;border-top:1px dotted #dcdcdc"></div>
<div style="position:absolute;left:57.92px;top:601.95px;width:0;height:38.89px;border-left:1px dotted #c6c6c6"></div>
<div style="position:absolute;left:61.47px;top:608.12px;width:5.09px;height:0;border-top:1px dotted #dcdcdc"></div>
<div style="position:absolute;left:61.47px;top:618.86px;width:5.09px;height:0;border-top:1px dotted #dcdcdc"></div>
<div style="position:absolute;left:61.47px;top:629.60px;width:5.09px;height:0;border-top:1px dotted #dcdcdc"></div>
<div style="position:absolute;left:61.47px;top:640.34px;width:5.09px;height:0;border-top:1px dotted #dcdcdc"></div>
<div style="position:absolute;left:48.74px;top:651.08px;width:5.09px;height:0;border-top:1px dotted #dcdcdc"></div>
<div style="position:absolute;left:57.92px;top:655.65px;width:0;height:28.15px;border-left:1px dotted #c6c6c6"></div>
<div style="position:absolute;left:61.47px;top:661.82px;width:5.09px;height:0;border-top:1px dotted #dcdcdc"></div>
<div style="position:absolute;left:61.47px;top:672.56px;width:5.09px;height:0;border-top:1px dotted #dcdcdc"></div>
<div style="position:absolute;left:61.47px;top:683.30px;width:5.09px;height:0;border-top:1px dotted #dcdcdc"></div>
<div style="position:absolute;left:48.74px;top:694.04px;width:5.09px;height:0;border-top:1px dotted #dcdcdc"></div>
<div style="position:absolute;left:57.92px;top:698.61px;width:0;height:81.85px;border-left:1px dotted #c6c6c6"></div>
<div style="position:absolute;left:61.47px;top:704.78px;width:5.09px;height:0;border-top:1px dotted #dcdcdc"></div>
<div style="position:absolute;left:61.47px;top:715.52px;width:5.09px;height:0;border-top:1px dotted #dcdcdc"></div>
<div style="position:absolute;left:61.47px;top:726.26px;width:5.09px;height:0;border-top:1px dotted #dcdcdc"></div>
<div style="position:absolute;left:61.47px;top:737.00px;width:5.09px;height:0;border-top:1px dotted #dcdcdc"></div>
<div style="position:absolute;left:61.47px;top:747.74px;width:5.09px;height:0;border-top:1px dotted #dcdcdc"></div>
<div style="position:absolute;left:61.47px;top:758.48px;width:5.09px;height:0;border-top:1px dotted #dcdcdc"></div>
<div style="position:absolute;left:61.47px;top:769.22px;width:5.09px;height:0;border-top:1px dotted #dcdcdc"></div>
<div style="position:absolute;left:61.47px;top:779.96px;width:5.09px;height:0;border-top:1px dotted #dcdcdc"></div>
<div style="position:absolute;left:48.74px;top:790.70px;width:5.09px;height:0;border-top:1px dotted #dcdcdc"></div>
<div style="position:absolute;left:57.92px;top:795.27px;width:0;height:17.41px;border-left:1px dotted #c6c6c6"></div>
<div style="position:absolute;left:61.47px;top:801.44px;width:5.09px;height:0;border-top:1px dotted #dcdcdc"></div>
<div style="position:absolute;left:61.47px;top:812.18px;width:5.09px;height:0;border-top:1px dotted #dcdcdc"></div>
<div style="position:absolute;left:48.74px;top:822.92px;width:5.09px;height:0;border-top:1px dotted #dcdcdc"></div>
<div style="position:absolute;left:48.74px;top:833.66px;width:5.09px;height:0;border-top:1px dotted #dcdcdc"></div>
<svg style="position:absolute;left:3.10px;top:410.72px" width="9.16" height="9.16" viewBox="0 0 18 18"><rect x="0.5" y="4" width="6.5" height="5.5" rx="1" fill="#5f8fcc"/><path d="M3.5 9.5 V12.5 H8" stroke="#6a9ad0" stroke-width="1.5" fill="none"/><path d="M14 0.5 V6.5 Q14 9 10.5 8.5" stroke="#3a68b0" stroke-width="2.2" fill="none"/><rect x="8.5" y="10" width="7.5" height="7.5" fill="#e0b040"/><rect x="11" y="12.5" width="2.5" height="2.5" fill="#fbeaa8"/></svg>
<div class="tt" style="left:15.10px;top:410.40px;font-size:8.4px;color:#383838;transform:scaleX(0.8555)">rszmrt.jar</div>
<svg style="position:absolute;left:4.54px;top:422.58px" width="6.92" height="6.92" viewBox="0 0 10 10"><rect x="0.7" y="0.7" width="8.6" height="8.6" rx="1.5" fill="#f0f0f0" stroke="#bdbdbd" stroke-width="1.4"/><path d="M3 5 H7" stroke="#4a70b0" stroke-width="1.2"/></svg>
<svg style="position:absolute;left:15.53px;top:422.06px" width="10.43" height="8.35" viewBox="0 0 20 16"><rect x="1" y="1" width="17.5" height="14" rx="2.5" fill="#cf9445"/><path d="M10 2.5 H17 M10 5 H17 M10 7.5 H17" stroke="#a86c35" stroke-width="1.2"/><path d="M2 2 Q5 1 8.5 2.5 L9.5 14 L2 14 Z" fill="#f8ecc8"/><path d="M3.5 9 L19.8 9 L17.5 15.2 L1 15.2 Z" fill="#efcb66"/></svg>
<div class="tt" style="left:27.83px;top:421.14px;font-size:8.4px;color:#383838;transform:scaleX(0.8296)">Source code</div>
<svg style="position:absolute;left:17.27px;top:433.32px" width="6.92" height="6.92" viewBox="0 0 10 10"><rect x="0.7" y="0.7" width="8.6" height="8.6" rx="1.5" fill="#f0f0f0" stroke="#bdbdbd" stroke-width="1.4"/><path d="M3 5 H7" stroke="#4a70b0" stroke-width="1.2"/><path d="M5 3 V7" stroke="#4a70b0" stroke-width="1.2"/></svg>
<svg style="position:absolute;left:28.76px;top:432.50px" width="8.34" height="8.34" viewBox="0 0 18 18"><rect x="1.2" y="1.2" width="15.6" height="15.6" rx="0.8" fill="#f8e4ac" stroke="#d09850" stroke-width="1.9"/><path d="M9 0.5 V17.5 M0 9 H18" stroke="#a8703a" stroke-width="2.2"/></svg>
<div class="tt" style="left:40.56px;top:431.88px;font-size:8.4px;color:#383838;transform:scaleX(0.8864)">android.support.constraint</div>
<svg style="position:absolute;left:17.27px;top:444.06px" width="6.92" height="6.92" viewBox="0 0 10 10"><rect x="0.7" y="0.7" width="8.6" height="8.6" rx="1.5" fill="#f0f0f0" stroke="#bdbdbd" stroke-width="1.4"/><path d="M3 5 H7" stroke="#4a70b0" stroke-width="1.2"/></svg>
<svg style="position:absolute;left:28.76px;top:443.24px" width="8.34" height="8.34" viewBox="0 0 18 18"><rect x="1.2" y="1.2" width="15.6" height="15.6" rx="0.8" fill="#f8e4ac" stroke="#d09850" stroke-width="1.9"/><path d="M9 0.5 V17.5 M0 9 H18" stroke="#a8703a" stroke-width="2.2"/></svg>
<div class="tt" style="left:40.56px;top:442.62px;font-size:8.4px;color:#383838;transform:scaleX(0.8654)">com.rsjqvjp.pdmozu</div>
<svg style="position:absolute;left:30.00px;top:454.80px" width="6.92" height="6.92" viewBox="0 0 10 10"><rect x="0.7" y="0.7" width="8.6" height="8.6" rx="1.5" fill="#f0f0f0" stroke="#bdbdbd" stroke-width="1.4"/><path d="M3 5 H7" stroke="#4a70b0" stroke-width="1.2"/></svg>
<svg style="position:absolute;left:41.49px;top:453.98px" width="8.34" height="8.34" viewBox="0 0 18 18"><rect x="1.2" y="1.2" width="15.6" height="15.6" rx="0.8" fill="#f8e4ac" stroke="#d09850" stroke-width="1.9"/><path d="M9 0.5 V17.5 M0 9 H18" stroke="#a8703a" stroke-width="2.2"/></svg>
<div class="tt" style="left:53.29px;top:453.36px;font-size:8.4px;color:#383838;transform:scaleX(0.8812)">hcgfyevbuzo</div>
<svg style="position:absolute;left:42.73px;top:465.54px" width="6.92" height="6.92" viewBox="0 0 10 10"><rect x="0.7" y="0.7" width="8.6" height="8.6" rx="1.5" fill="#f0f0f0" stroke="#bdbdbd" stroke-width="1.4"/><path d="M3 5 H7" stroke="#4a70b0" stroke-width="1.2"/><path d="M5 3 V7" stroke="#4a70b0" stroke-width="1.2"/></svg>
<svg style="position:absolute;left:53.92px;top:463.62px" width="9.16" height="9.16" viewBox="0 0 18 18"><circle cx="9" cy="9" r="8.7" fill="#3d9a4e"/><path d="M12.4 5.8 A4.5 4.5 0 1 0 12.4 12.2" stroke="#e8f4e8" stroke-width="3.3" fill="none"/></svg>
<div class="tt" style="left:66.02px;top:464.10px;font-size:8.4px;color:#383838;transform:scaleX(0.8163)">C0042a</div>
<svg style="position:absolute;left:42.73px;top:476.28px" width="6.92" height="6.92" viewBox="0 0 10 10"><rect x="0.7" y="0.7" width="8.6" height="8.6" rx="1.5" fill="#f0f0f0" stroke="#bdbdbd" stroke-width="1.4"/><path d="M3 5 H7" stroke="#4a70b0" stroke-width="1.2"/><path d="M5 3 V7" stroke="#4a70b0" stroke-width="1.2"/></svg>
<svg style="position:absolute;left:53.92px;top:474.36px" width="9.16" height="9.16" viewBox="0 0 18 18"><circle cx="9" cy="9" r="8.7" fill="#3d9a4e"/><path d="M12.4 5.8 A4.5 4.5 0 1 0 12.4 12.2" stroke="#e8f4e8" stroke-width="3.3" fill="none"/></svg>
<div class="tt" style="left:66.02px;top:474.84px;font-size:8.4px;color:#383838;transform:scaleX(0.8163)">C0043b</div>
<svg style="position:absolute;left:42.73px;top:487.02px" width="6.92" height="6.92" viewBox="0 0 10 10"><rect x="0.7" y="0.7" width="8.6" height="8.6" rx="1.5" fill="#f0f0f0" stroke="#bdbdbd" stroke-width="1.4"/><path d="M3 5 H7" stroke="#4a70b0" stroke-width="1.2"/><path d="M5 3 V7" stroke="#4a70b0" stroke-width="1.2"/></svg>
<svg style="position:absolute;left:53.92px;top:485.10px" width="9.16" height="9.16" viewBox="0 0 18 18"><circle cx="9" cy="9" r="8.7" fill="#3d9a4e"/><path d="M12.4 5.8 A4.5 4.5 0 1 0 12.4 12.2" stroke="#e8f4e8" stroke-width="3.3" fill="none"/></svg>
<div class="tt" style="left:66.02px;top:485.58px;font-size:8.4px;color:#383838;transform:scaleX(0.8273)">cadgeiQz</div>
<svg style="position:absolute;left:30.00px;top:497.76px" width="6.92" height="6.92" viewBox="0 0 10 10"><rect x="0.7" y="0.7" width="8.6" height="8.6" rx="1.5" fill="#f0f0f0" stroke="#bdbdbd" stroke-width="1.4"/><path d="M3 5 H7" stroke="#4a70b0" stroke-width="1.2"/></svg>
<svg style="position:absolute;left:41.49px;top:496.94px" width="8.34" height="8.34" viewBox="0 0 18 18"><rect x="1.2" y="1.2" width="15.6" height="15.6" rx="0.8" fill="#f8e4ac" stroke="#d09850" stroke-width="1.9"/><path d="M9 0.5 V17.5 M0 9 H18" stroke="#a8703a" stroke-width="2.2"/></svg>
<div class="tt" style="left:53.29px;top:496.32px;font-size:8.4px;color:#383838;transform:scaleX(0.9104)">jytltgwmji</div>
<svg style="position:absolute;left:42.73px;top:508.50px" width="6.92" height="6.92" viewBox="0 0 10 10"><rect x="0.7" y="0.7" width="8.6" height="8.6" rx="1.5" fill="#f0f0f0" stroke="#bdbdbd" stroke-width="1.4"/><path d="M3 5 H7" stroke="#4a70b0" stroke-width="1.2"/><path d="M5 3 V7" stroke="#4a70b0" stroke-width="1.2"/></svg>
<svg style="position:absolute;left:53.92px;top:506.58px" width="9.16" height="9.16" viewBox="0 0 18 18"><circle cx="9" cy="9" r="8.7" fill="#3d9a4e"/><path d="M12.4 5.8 A4.5 4.5 0 1 0 12.4 12.2" stroke="#e8f4e8" stroke-width="3.3" fill="none"/></svg>
<div class="tt" style="left:66.02px;top:507.06px;font-size:8.4px;color:#383838;transform:scaleX(0.7990)">ONGDLtzWD</div>
<svg style="position:absolute;left:42.73px;top:519.24px" width="6.92" height="6.92" viewBox="0 0 10 10"><rect x="0.7" y="0.7" width="8.6" height="8.6" rx="1.5" fill="#f0f0f0" stroke="#bdbdbd" stroke-width="1.4"/><path d="M3 5 H7" stroke="#4a70b0" stroke-width="1.2"/><path d="M5 3 V7" stroke="#4a70b0" stroke-width="1.2"/></svg>
<svg style="position:absolute;left:53.92px;top:517.32px" width="9.16" height="9.16" viewBox="0 0 18 18"><circle cx="9" cy="9" r="8.7" fill="#3d9a4e"/><path d="M12.4 5.8 A4.5 4.5 0 1 0 12.4 12.2" stroke="#e8f4e8" stroke-width="3.3" fill="none"/></svg>
<div class="tt" style="left:66.02px;top:517.80px;font-size:8.4px;color:#383838;transform:scaleX(0.7863)">OaDLkOD</div>
<svg style="position:absolute;left:42.73px;top:529.98px" width="6.92" height="6.92" viewBox="0 0 10 10"><rect x="0.7" y="0.7" width="8.6" height="8.6" rx="1.5" fill="#f0f0f0" stroke="#bdbdbd" stroke-width="1.4"/><path d="M3 5 H7" stroke="#4a70b0" stroke-width="1.2"/><path d="M5 3 V7" stroke="#4a70b0" stroke-width="1.2"/></svg>
<svg style="position:absolute;left:53.92px;top:528.06px" width="9.16" height="9.16" viewBox="0 0 18 18"><circle cx="9" cy="9" r="8.7" fill="#3d9a4e"/><path d="M12.4 5.8 A4.5 4.5 0 1 0 12.4 12.2" stroke="#e8f4e8" stroke-width="3.3" fill="none"/></svg>
<div class="tt" style="left:66.02px;top:528.54px;font-size:8.4px;color:#383838;transform:scaleX(0.8254)">PTZTmtjqdOWo</div>
<svg style="position:absolute;left:42.73px;top:540.72px" width="6.92" height="6.92" viewBox="0 0 10 10"><rect x="0.7" y="0.7" width="8.6" height="8.6" rx="1.5" fill="#f0f0f0" stroke="#bdbdbd" stroke-width="1.4"/><path d="M3 5 H7" stroke="#4a70b0" stroke-width="1.2"/><path d="M5 3 V7" stroke="#4a70b0" stroke-width="1.2"/></svg>
<svg style="position:absolute;left:53.92px;top:538.80px" width="9.16" height="9.16" viewBox="0 0 18 18"><circle cx="9" cy="9" r="8.7" fill="#3d9a4e"/><path d="M12.4 5.8 A4.5 4.5 0 1 0 12.4 12.2" stroke="#e8f4e8" stroke-width="3.3" fill="none"/></svg>
<div style="position:absolute;left:65.92px;top:539.50px;width:53.90px;height:10.38px;background:#0c74dc"></div>
<div class="tt" style="left:66.02px;top:539.28px;font-size:8.4px;color:#fff;transform:scaleX(0.8058)">vaORBzwkMPce</div>
<svg style="position:absolute;left:30.00px;top:551.46px" width="6.92" height="6.92" viewBox="0 0 10 10"><rect x="0.7" y="0.7" width="8.6" height="8.6" rx="1.5" fill="#f0f0f0" stroke="#bdbdbd" stroke-width="1.4"/><path d="M3 5 H7" stroke="#4a70b0" stroke-width="1.2"/></svg>
<svg style="position:absolute;left:41.49px;top:550.64px" width="8.34" height="8.34" viewBox="0 0 18 18"><rect x="1.2" y="1.2" width="15.6" height="15.6" rx="0.8" fill="#f8e4ac" stroke="#d09850" stroke-width="1.9"/><path d="M9 0.5 V17.5 M0 9 H18" stroke="#a8703a" stroke-width="2.2"/></svg>
<div class="tt" style="left:53.29px;top:550.02px;font-size:8.4px;color:#383838;transform:scaleX(0.9011)">vwtvid</div>
<svg style="position:absolute;left:42.73px;top:562.20px" width="6.92" height="6.92" viewBox="0 0 10 10"><rect x="0.7" y="0.7" width="8.6" height="8.6" rx="1.5" fill="#f0f0f0" stroke="#bdbdbd" stroke-width="1.4"/><path d="M3 5 H7" stroke="#4a70b0" stroke-width="1.2"/></svg>
<svg style="position:absolute;left:54.22px;top:561.38px" width="8.34" height="8.34" viewBox="0 0 18 18"><rect x="1.2" y="1.2" width="15.6" height="15.6" rx="0.8" fill="#f8e4ac" stroke="#d09850" stroke-width="1.9"/><path d="M9 0.5 V17.5 M0 9 H18" stroke="#a8703a" stroke-width="2.2"/></svg>
<div class="tt" style="left:66.02px;top:560.76px;font-size:8.4px;color:#383838;transform:scaleX(0.8592)">bhbsubkrx</div>
<svg style="position:absolute;left:55.46px;top:572.94px" width="6.92" height="6.92" viewBox="0 0 10 10"><rect x="0.7" y="0.7" width="8.6" height="8.6" rx="1.5" fill="#f0f0f0" stroke="#bdbdbd" stroke-width="1.4"/><path d="M3 5 H7" stroke="#4a70b0" stroke-width="1.2"/><path d="M5 3 V7" stroke="#4a70b0" stroke-width="1.2"/></svg>
<svg style="position:absolute;left:66.65px;top:571.02px" width="9.16" height="9.16" viewBox="0 0 18 18"><circle cx="9" cy="9" r="8.7" fill="#3d9a4e"/><path d="M12.4 5.8 A4.5 4.5 0 1 0 12.4 12.2" stroke="#e8f4e8" stroke-width="3.3" fill="none"/></svg>
<div class="tt" style="left:78.75px;top:571.50px;font-size:8.4px;color:#383838;transform:scaleX(0.8124)">XfbpleKEhRe</div>
<svg style="position:absolute;left:55.46px;top:583.68px" width="6.92" height="6.92" viewBox="0 0 10 10"><rect x="0.7" y="0.7" width="8.6" height="8.6" rx="1.5" fill="#f0f0f0" stroke="#bdbdbd" stroke-width="1.4"/><path d="M3 5 H7" stroke="#4a70b0" stroke-width="1.2"/><path d="M5 3 V7" stroke="#4a70b0" stroke-width="1.2"/></svg>
<svg style="position:absolute;left:66.65px;top:581.76px" width="9.16" height="9.16" viewBox="0 0 18 18"><circle cx="9" cy="9" r="8.7" fill="#3d9a4e"/><path d="M12.4 5.8 A4.5 4.5 0 1 0 12.4 12.2" stroke="#e8f4e8" stroke-width="3.3" fill="none"/></svg>
<div class="tt" style="left:78.75px;top:582.24px;font-size:8.4px;color:#383838;transform:scaleX(0.8384)">hIUDnGQst</div>
<svg style="position:absolute;left:42.73px;top:594.42px" width="6.92" height="6.92" viewBox="0 0 10 10"><rect x="0.7" y="0.7" width="8.6" height="8.6" rx="1.5" fill="#f0f0f0" stroke="#bdbdbd" stroke-width="1.4"/><path d="M3 5 H7" stroke="#4a70b0" stroke-width="1.2"/></svg>
<svg style="position:absolute;left:54.22px;top:593.60px" width="8.34" height="8.34" viewBox="0 0 18 18"><rect x="1.2" y="1.2" width="15.6" height="15.6" rx="0.8" fill="#f8e4ac" stroke="#d09850" stroke-width="1.9"/><path d="M9 0.5 V17.5 M0 9 H18" stroke="#a8703a" stroke-width="2.2"/></svg>
<div class="tt" style="left:66.02px;top:592.98px;font-size:8.4px;color:#383838;transform:scaleX(0.8457)">ngyemkzi</div>
<svg style="position:absolute;left:55.46px;top:605.16px" width="6.92" height="6.92" viewBox="0 0 10 10"><rect x="0.7" y="0.7" width="8.6" height="8.6" rx="1.5" fill="#f0f0f0" stroke="#bdbdbd" stroke-width="1.4"/><path d="M3 5 H7" stroke="#4a70b0" stroke-width="1.2"/><path d="M5 3 V7" stroke="#4a70b0" stroke-width="1.2"/></svg>
<svg style="position:absolute;left:66.65px;top:603.24px" width="9.16" height="9.16" viewBox="0 0 18 18"><circle cx="9" cy="9" r="8.7" fill="#3d9a4e"/><path d="M12.4 5.8 A4.5 4.5 0 1 0 12.4 12.2" stroke="#e8f4e8" stroke-width="3.3" fill="none"/></svg>
<div class="tt" style="left:78.75px;top:603.72px;font-size:8.4px;color:#383838;transform:scaleX(0.8472)">C0073a</div>
<svg style="position:absolute;left:55.46px;top:615.90px" width="6.92" height="6.92" viewBox="0 0 10 10"><rect x="0.7" y="0.7" width="8.6" height="8.6" rx="1.5" fill="#f0f0f0" stroke="#bdbdbd" stroke-width="1.4"/><path d="M3 5 H7" stroke="#4a70b0" stroke-width="1.2"/><path d="M5 3 V7" stroke="#4a70b0" stroke-width="1.2"/></svg>
<svg style="position:absolute;left:66.65px;top:613.98px" width="9.16" height="9.16" viewBox="0 0 18 18"><circle cx="9" cy="9" r="8.7" fill="#3d9a4e"/><path d="M12.4 5.8 A4.5 4.5 0 1 0 12.4 12.2" stroke="#e8f4e8" stroke-width="3.3" fill="none"/></svg>
<div class="tt" style="left:78.75px;top:614.46px;font-size:8.4px;color:#383838;transform:scaleX(0.8146)">HjJOGvTJF</div>
<svg style="position:absolute;left:55.46px;top:626.64px" width="6.92" height="6.92" viewBox="0 0 10 10"><rect x="0.7" y="0.7" width="8.6" height="8.6" rx="1.5" fill="#f0f0f0" stroke="#bdbdbd" stroke-width="1.4"/><path d="M3 5 H7" stroke="#4a70b0" stroke-width="1.2"/><path d="M5 3 V7" stroke="#4a70b0" stroke-width="1.2"/></svg>
<svg style="position:absolute;left:66.65px;top:624.72px" width="9.16" height="9.16" viewBox="0 0 18 18"><circle cx="9" cy="9" r="8.7" fill="#3d9a4e"/><path d="M12.4 5.8 A4.5 4.5 0 1 0 12.4 12.2" stroke="#e8f4e8" stroke-width="3.3" fill="none"/></svg>
<div class="tt" style="left:78.75px;top:625.20px;font-size:8.4px;color:#383838;transform:scaleX(0.8328)">hbDwiyoOKBt</div>
<svg style="position:absolute;left:55.46px;top:637.38px" width="6.92" height="6.92" viewBox="0 0 10 10"><rect x="0.7" y="0.7" width="8.6" height="8.6" rx="1.5" fill="#f0f0f0" stroke="#bdbdbd" stroke-width="1.4"/><path d="M3 5 H7" stroke="#4a70b0" stroke-width="1.2"/><path d="M5 3 V7" stroke="#4a70b0" stroke-width="1.2"/></svg>
<svg style="position:absolute;left:66.65px;top:635.46px" width="9.16" height="9.16" viewBox="0 0 18 18"><circle cx="9" cy="9" r="8.7" fill="#3d9a4e"/><path d="M12.4 5.8 A4.5 4.5 0 1 0 12.4 12.2" stroke="#e8f4e8" stroke-width="3.3" fill="none"/></svg>
<div class="tt" style="left:78.75px;top:635.94px;font-size:8.4px;color:#383838;transform:scaleX(0.8191)">xPHubWBrFdt</div>
<svg style="position:absolute;left:42.73px;top:648.12px" width="6.92" height="6.92" viewBox="0 0 10 10"><rect x="0.7" y="0.7" width="8.6" height="8.6" rx="1.5" fill="#f0f0f0" stroke="#bdbdbd" stroke-width="1.4"/><path d="M3 5 H7" stroke="#4a70b0" stroke-width="1.2"/></svg>
<svg style="position:absolute;left:54.22px;top:647.30px" width="8.34" height="8.34" viewBox="0 0 18 18"><rect x="1.2" y="1.2" width="15.6" height="15.6" rx="0.8" fill="#f8e4ac" stroke="#d09850" stroke-width="1.9"/><path d="M9 0.5 V17.5 M0 9 H18" stroke="#a8703a" stroke-width="2.2"/></svg>
<div class="tt" style="left:66.02px;top:646.68px;font-size:8.4px;color:#383838;transform:scaleX(0.8573)">p002a</div>
<svg style="position:absolute;left:55.46px;top:658.86px" width="6.92" height="6.92" viewBox="0 0 10 10"><rect x="0.7" y="0.7" width="8.6" height="8.6" rx="1.5" fill="#f0f0f0" stroke="#bdbdbd" stroke-width="1.4"/><path d="M3 5 H7" stroke="#4a70b0" stroke-width="1.2"/><path d="M5 3 V7" stroke="#4a70b0" stroke-width="1.2"/></svg>
<svg style="position:absolute;left:66.65px;top:656.94px" width="9.16" height="9.16" viewBox="0 0 18 18"><circle cx="9" cy="9" r="8.7" fill="#3d9a4e"/><path d="M12.4 5.8 A4.5 4.5 0 1 0 12.4 12.2" stroke="#e8f4e8" stroke-width="3.3" fill="none"/></svg>
<div class="tt" style="left:78.75px;top:657.42px;font-size:8.4px;color:#383838;transform:scaleX(0.8472)">C0047a</div>
<svg style="position:absolute;left:55.46px;top:669.60px" width="6.92" height="6.92" viewBox="0 0 10 10"><rect x="0.7" y="0.7" width="8.6" height="8.6" rx="1.5" fill="#f0f0f0" stroke="#bdbdbd" stroke-width="1.4"/><path d="M3 5 H7" stroke="#4a70b0" stroke-width="1.2"/><path d="M5 3 V7" stroke="#4a70b0" stroke-width="1.2"/></svg>
<svg style="position:absolute;left:66.65px;top:667.68px" width="9.16" height="9.16" viewBox="0 0 18 18"><circle cx="9" cy="9" r="8.7" fill="#3d9a4e"/><path d="M12.4 5.8 A4.5 4.5 0 1 0 12.4 12.2" stroke="#e8f4e8" stroke-width="3.3" fill="none"/></svg>
<div class="tt" style="left:78.75px;top:668.16px;font-size:8.4px;color:#383838;transform:scaleX(0.8472)">C0048b</div>
<svg style="position:absolute;left:55.46px;top:680.34px" width="6.92" height="6.92" viewBox="0 0 10 10"><rect x="0.7" y="0.7" width="8.6" height="8.6" rx="1.5" fill="#f0f0f0" stroke="#bdbdbd" stroke-width="1.4"/><path d="M3 5 H7" stroke="#4a70b0" stroke-width="1.2"/><path d="M5 3 V7" stroke="#4a70b0" stroke-width="1.2"/></svg>
<svg style="position:absolute;left:66.65px;top:678.42px" width="9.16" height="9.16" viewBox="0 0 18 18"><circle cx="9" cy="9" r="8.7" fill="#3d9a4e"/><path d="M12.4 5.8 A4.5 4.5 0 1 0 12.4 12.2" stroke="#e8f4e8" stroke-width="3.3" fill="none"/></svg>
<div class="tt" style="left:78.75px;top:678.90px;font-size:8.4px;color:#383838;transform:scaleX(0.8555)">C0049c</div>
<svg style="position:absolute;left:42.73px;top:691.08px" width="6.92" height="6.92" viewBox="0 0 10 10"><rect x="0.7" y="0.7" width="8.6" height="8.6" rx="1.5" fill="#f0f0f0" stroke="#bdbdbd" stroke-width="1.4"/><path d="M3 5 H7" stroke="#4a70b0" stroke-width="1.2"/></svg>
<svg style="position:absolute;left:54.22px;top:690.26px" width="8.34" height="8.34" viewBox="0 0 18 18"><rect x="1.2" y="1.2" width="15.6" height="15.6" rx="0.8" fill="#f8e4ac" stroke="#d09850" stroke-width="1.9"/><path d="M9 0.5 V17.5 M0 9 H18" stroke="#a8703a" stroke-width="2.2"/></svg>
<div class="tt" style="left:66.02px;top:689.64px;font-size:8.4px;color:#383838;transform:scaleX(0.8573)">p003b</div>
<svg style="position:absolute;left:55.46px;top:701.82px" width="6.92" height="6.92" viewBox="0 0 10 10"><rect x="0.7" y="0.7" width="8.6" height="8.6" rx="1.5" fill="#f0f0f0" stroke="#bdbdbd" stroke-width="1.4"/><path d="M3 5 H7" stroke="#4a70b0" stroke-width="1.2"/><path d="M5 3 V7" stroke="#4a70b0" stroke-width="1.2"/></svg>
<svg style="position:absolute;left:66.65px;top:699.90px" width="9.16" height="9.16" viewBox="0 0 18 18"><circle cx="9" cy="9" r="8.7" fill="#3d9a4e"/><path d="M12.4 5.8 A4.5 4.5 0 1 0 12.4 12.2" stroke="#e8f4e8" stroke-width="3.3" fill="none"/></svg>
<div class="tt" style="left:78.75px;top:700.38px;font-size:8.4px;color:#383838;transform:scaleX(0.8555)">C0054c</div>
<svg style="position:absolute;left:55.46px;top:712.56px" width="6.92" height="6.92" viewBox="0 0 10 10"><rect x="0.7" y="0.7" width="8.6" height="8.6" rx="1.5" fill="#f0f0f0" stroke="#bdbdbd" stroke-width="1.4"/><path d="M3 5 H7" stroke="#4a70b0" stroke-width="1.2"/><path d="M5 3 V7" stroke="#4a70b0" stroke-width="1.2"/></svg>
<svg style="position:absolute;left:66.65px;top:710.64px" width="9.16" height="9.16" viewBox="0 0 18 18"><circle cx="9" cy="9" r="8.7" fill="#3d9a4e"/><path d="M12.4 5.8 A4.5 4.5 0 1 0 12.4 12.2" stroke="#e8f4e8" stroke-width="3.3" fill="none"/></svg>
<div class="tt" style="left:78.75px;top:711.12px;font-size:8.4px;color:#383838;transform:scaleX(0.8472)">C0056a</div>
<svg style="position:absolute;left:55.46px;top:723.30px" width="6.92" height="6.92" viewBox="0 0 10 10"><rect x="0.7" y="0.7" width="8.6" height="8.6" rx="1.5" fill="#f0f0f0" stroke="#bdbdbd" stroke-width="1.4"/><path d="M3 5 H7" stroke="#4a70b0" stroke-width="1.2"/><path d="M5 3 V7" stroke="#4a70b0" stroke-width="1.2"/></svg>
<svg style="position:absolute;left:66.65px;top:721.38px" width="9.16" height="9.16" viewBox="0 0 18 18"><circle cx="9" cy="9" r="8.7" fill="#3d9a4e"/><path d="M12.4 5.8 A4.5 4.5 0 1 0 12.4 12.2" stroke="#e8f4e8" stroke-width="3.3" fill="none"/></svg>
<div class="tt" style="left:78.75px;top:721.86px;font-size:8.4px;color:#383838;transform:scaleX(0.8369)">C0057b</div>
<svg style="position:absolute;left:55.46px;top:734.04px" width="6.92" height="6.92" viewBox="0 0 10 10"><rect x="0.7" y="0.7" width="8.6" height="8.6" rx="1.5" fill="#f0f0f0" stroke="#bdbdbd" stroke-width="1.4"/><path d="M3 5 H7" stroke="#4a70b0" stroke-width="1.2"/><path d="M5 3 V7" stroke="#4a70b0" stroke-width="1.2"/></svg>
<svg style="position:absolute;left:66.65px;top:732.12px" width="9.16" height="9.16" viewBox="0 0 18 18"><circle cx="9" cy="9" r="8.7" fill="#3d9a4e"/><path d="M12.4 5.8 A4.5 4.5 0 1 0 12.4 12.2" stroke="#e8f4e8" stroke-width="3.3" fill="none"/></svg>
<div class="tt" style="left:78.75px;top:732.60px;font-size:8.4px;color:#383838;transform:scaleX(0.8864)">C0059f</div>
<svg style="position:absolute;left:55.46px;top:744.78px" width="6.92" height="6.92" viewBox="0 0 10 10"><rect x="0.7" y="0.7" width="8.6" height="8.6" rx="1.5" fill="#f0f0f0" stroke="#bdbdbd" stroke-width="1.4"/><path d="M3 5 H7" stroke="#4a70b0" stroke-width="1.2"/><path d="M5 3 V7" stroke="#4a70b0" stroke-width="1.2"/></svg>
<svg style="position:absolute;left:66.65px;top:742.86px;overflow:visible" width="9.16" height="9.16" viewBox="0 0 18 18"><circle cx="9" cy="9" r="8.7" fill="#3d9a4e"/><path d="M12.4 5.8 A4.5 4.5 0 1 0 12.4 12.2" stroke="#e8f4e8" stroke-width="3.3" fill="none"/><path d="M9.5 20 L15.2 10 L20.8 20 Z" fill="#3f7acc" stroke="#2f62b0" stroke-width="0.8"/><circle cx="15.2" cy="16.3" r="1.6" fill="#1a6ff0"/></svg>
<div class="tt" style="left:78.75px;top:743.34px;font-size:8.4px;color:#383838;transform:scaleX(0.8369)">C0061d</div>
<svg style="position:absolute;left:55.46px;top:755.52px" width="6.92" height="6.92" viewBox="0 0 10 10"><rect x="0.7" y="0.7" width="8.6" height="8.6" rx="1.5" fill="#f0f0f0" stroke="#bdbdbd" stroke-width="1.4"/><path d="M3 5 H7" stroke="#4a70b0" stroke-width="1.2"/><path d="M5 3 V7" stroke="#4a70b0" stroke-width="1.2"/></svg>
<svg style="position:absolute;left:66.65px;top:753.60px" width="9.16" height="9.16" viewBox="0 0 18 18"><circle cx="9" cy="9" r="8.7" fill="#3d9a4e"/><path d="M12.4 5.8 A4.5 4.5 0 1 0 12.4 12.2" stroke="#e8f4e8" stroke-width="3.3" fill="none"/></svg>
<div class="tt" style="left:78.75px;top:754.08px;font-size:8.4px;color:#383838;transform:scaleX(0.8369)">C0063e</div>
<svg style="position:absolute;left:55.46px;top:766.26px" width="6.92" height="6.92" viewBox="0 0 10 10"><rect x="0.7" y="0.7" width="8.6" height="8.6" rx="1.5" fill="#f0f0f0" stroke="#bdbdbd" stroke-width="1.4"/><path d="M3 5 H7" stroke="#4a70b0" stroke-width="1.2"/><path d="M5 3 V7" stroke="#4a70b0" stroke-width="1.2"/></svg>
<svg style="position:absolute;left:66.65px;top:764.34px" width="9.16" height="9.16" viewBox="0 0 18 18"><circle cx="9" cy="9" r="8.7" fill="#3d9a4e"/><path d="M12.4 5.8 A4.5 4.5 0 1 0 12.4 12.2" stroke="#e8f4e8" stroke-width="3.3" fill="none"/></svg>
<div class="tt" style="left:78.75px;top:764.82px;font-size:8.4px;color:#383838;transform:scaleX(0.8369)">C0064g</div>
<svg style="position:absolute;left:55.46px;top:777.00px" width="6.92" height="6.92" viewBox="0 0 10 10"><rect x="0.7" y="0.7" width="8.6" height="8.6" rx="1.5" fill="#f0f0f0" stroke="#bdbdbd" stroke-width="1.4"/><path d="M3 5 H7" stroke="#4a70b0" stroke-width="1.2"/><path d="M5 3 V7" stroke="#4a70b0" stroke-width="1.2"/></svg>
<svg style="position:absolute;left:66.65px;top:775.08px" width="9.16" height="9.16" viewBox="0 0 18 18"><circle cx="9" cy="9" r="8.7" fill="#3d9a4e"/><path d="M12.4 5.8 A4.5 4.5 0 1 0 12.4 12.2" stroke="#e8f4e8" stroke-width="3.3" fill="none"/></svg>
<div class="tt" style="left:78.75px;top:775.56px;font-size:8.4px;color:#383838;transform:scaleX(0.8369)">C0066h</div>
<svg style="position:absolute;left:42.73px;top:787.74px" width="6.92" height="6.92" viewBox="0 0 10 10"><rect x="0.7" y="0.7" width="8.6" height="8.6" rx="1.5" fill="#f0f0f0" stroke="#bdbdbd" stroke-width="1.4"/><path d="M3 5 H7" stroke="#4a70b0" stroke-width="1.2"/></svg>
<svg style="position:absolute;left:54.22px;top:786.92px" width="8.34" height="8.34" viewBox="0 0 18 18"><rect x="1.2" y="1.2" width="15.6" height="15.6" rx="0.8" fill="#f8e4ac" stroke="#d09850" stroke-width="1.9"/><path d="M9 0.5 V17.5 M0 9 H18" stroke="#a8703a" stroke-width="2.2"/></svg>
<div class="tt" style="left:66.02px;top:786.30px;font-size:8.4px;color:#383838;transform:scaleX(0.8543)">syovgwzmn</div>
<svg style="position:absolute;left:55.46px;top:798.48px" width="6.92" height="6.92" viewBox="0 0 10 10"><rect x="0.7" y="0.7" width="8.6" height="8.6" rx="1.5" fill="#f0f0f0" stroke="#bdbdbd" stroke-width="1.4"/><path d="M3 5 H7" stroke="#4a70b0" stroke-width="1.2"/><path d="M5 3 V7" stroke="#4a70b0" stroke-width="1.2"/></svg>
<svg style="position:absolute;left:66.65px;top:796.56px" width="9.16" height="9.16" viewBox="0 0 18 18"><circle cx="9" cy="9" r="8.7" fill="#3d9a4e"/><path d="M12.4 5.8 A4.5 4.5 0 1 0 12.4 12.2" stroke="#e8f4e8" stroke-width="3.3" fill="none"/></svg>
<div class="tt" style="left:78.75px;top:797.04px;font-size:8.4px;color:#383838;transform:scaleX(0.7812)">UKkzSFDSjNy</div>
<svg style="position:absolute;left:55.46px;top:809.22px" width="6.92" height="6.92" viewBox="0 0 10 10"><rect x="0.7" y="0.7" width="8.6" height="8.6" rx="1.5" fill="#f0f0f0" stroke="#bdbdbd" stroke-width="1.4"/><path d="M3 5 H7" stroke="#4a70b0" stroke-width="1.2"/><path d="M5 3 V7" stroke="#4a70b0" stroke-width="1.2"/></svg>
<svg style="position:absolute;left:66.65px;top:807.30px" width="9.16" height="9.16" viewBox="0 0 18 18"><circle cx="9" cy="9" r="8.7" fill="#3d9a4e"/><path d="M12.4 5.8 A4.5 4.5 0 1 0 12.4 12.2" stroke="#e8f4e8" stroke-width="3.3" fill="none"/></svg>
<div class="tt" style="left:78.75px;top:807.78px;font-size:8.4px;color:#383838;transform:scaleX(0.7935)">kMpUsLBTcC</div>
<svg style="position:absolute;left:42.73px;top:819.96px" width="6.92" height="6.92" viewBox="0 0 10 10"><rect x="0.7" y="0.7" width="8.6" height="8.6" rx="1.5" fill="#f0f0f0" stroke="#bdbdbd" stroke-width="1.4"/><path d="M3 5 H7" stroke="#4a70b0" stroke-width="1.2"/><path d="M5 3 V7" stroke="#4a70b0" stroke-width="1.2"/></svg>
<svg style="position:absolute;left:53.92px;top:818.04px" width="9.16" height="9.16" viewBox="0 0 18 18"><circle cx="9" cy="9" r="8.7" fill="#3d9a4e"/><path d="M12.4 5.8 A4.5 4.5 0 1 0 12.4 12.2" stroke="#e8f4e8" stroke-width="3.3" fill="none"/></svg>
<div class="tt" style="left:66.02px;top:818.52px;font-size:8.4px;color:#383838;transform:scaleX(0.8369)">C0065a</div>
<svg style="position:absolute;left:42.73px;top:830.70px" width="6.92" height="6.92" viewBox="0 0 10 10"><rect x="0.7" y="0.7" width="8.6" height="8.6" rx="1.5" fill="#f0f0f0" stroke="#bdbdbd" stroke-width="1.4"/><path d="M3 5 H7" stroke="#4a70b0" stroke-width="1.2"/><path d="M5 3 V7" stroke="#4a70b0" stroke-width="1.2"/></svg>
<svg style="position:absolute;left:53.92px;top:828.78px" width="9.16" height="9.16" viewBox="0 0 18 18"><circle cx="9" cy="9" r="8.7" fill="#3d9a4e"/><path d="M12.4 5.8 A4.5 4.5 0 1 0 12.4 12.2" stroke="#e8f4e8" stroke-width="3.3" fill="none"/></svg>
<div class="tt" style="left:66.02px;top:829.26px;font-size:8.4px;color:#383838;transform:scaleX(0.8369)">C0066b</div>
<div style="position:absolute;left:165px;top:410.5px;width:10.5px;height:10.8px;background:#f0f0f0"></div>
<svg style="position:absolute;left:167.30px;top:413.50px" width="6" height="6" viewBox="0 0 10 10"><path d="M1.8 7.2 L5 4 L8.2 7.2" stroke="#3c3c3c" stroke-width="2.3" fill="none"/></svg>
<div style="position:absolute;left:165px;top:421.3px;width:12px;height:400px;background:#cdcdcd"></div>
<div style="position:absolute;left:178.8px;top:410px;width:1.3px;height:400px;background:#858585"></div>
<div style="position:absolute;left:180.3px;top:410px;width:1.7px;height:400px;background:#d2d6da"></div>
<div style="position:absolute;left:180px;top:410.6px;width:525px;height:1px;background:#dfdfdf"></div>
<div style="position:absolute;left:180px;top:411.6px;width:525px;height:15.4px;background:#efefef"></div>
<div style="position:absolute;left:180px;top:427px;width:525px;height:0.7px;background:#e2e2e2"></div>
<div style="position:absolute;left:180px;top:429.9px;width:525px;height:1.3px;background:#bcbcbc"></div>
<div style="position:absolute;left:180px;top:0px;width:525px;height:770px;overflow:hidden"><div style="position:absolute;left:-180px;top:0px;width:705px;height:770px"><div class="tt" style="right:421.50px;top:417.30px;font-size:7.7px;color:#404040;transform:scaleX(0.9634);transform-origin:right">com.rsjqvjp.pdmozu.vwtvid.p002a.C0047a</div>
<svg style="position:absolute;left:292.62px;top:416.92px" width="8.75" height="8.75" viewBox="0 0 10 10"><path d="M1.6 1.6 L8.4 8.4 M8.4 1.6 L1.6 8.4" stroke="#e8777d" stroke-width="2.7" stroke-linecap="round"/></svg>
<div style="position:absolute;left:307.90px;top:411.60px;width:1px;height:15.60px;background:#dedede"></div>
<svg style="position:absolute;left:314.12px;top:415.82px" width="9.16" height="9.16" viewBox="0 0 18 18"><circle cx="9" cy="9" r="8.7" fill="#3d9a4e"/><path d="M12.4 5.8 A4.5 4.5 0 1 0 12.4 12.2" stroke="#e8f4e8" stroke-width="3.3" fill="none"/></svg>
<div class="tt" style="left:326.50px;top:417.30px;font-size:7.7px;color:#404040;transform:scaleX(0.9515)">com.rsjqvjp.pdmozu.vwtvid.bhbsubkrx.XfbpleKEhRe</div>
<svg style="position:absolute;left:506.32px;top:416.92px" width="8.75" height="8.75" viewBox="0 0 10 10"><path d="M1.6 1.6 L8.4 8.4 M8.4 1.6 L1.6 8.4" stroke="#e8777d" stroke-width="2.7" stroke-linecap="round"/></svg>
<div style="position:absolute;left:521.20px;top:411.60px;width:1px;height:15.60px;background:#dedede"></div>
<svg style="position:absolute;left:527.52px;top:415.82px" width="9.16" height="9.16" viewBox="0 0 18 18"><circle cx="9" cy="9" r="8.7" fill="#3d9a4e"/><path d="M12.4 5.8 A4.5 4.5 0 1 0 12.4 12.2" stroke="#e8f4e8" stroke-width="3.3" fill="none"/></svg>
<div class="tt" style="left:540.50px;top:417.30px;font-size:7.7px;color:#404040;transform:scaleX(0.9707)">com.rsjqvjp.pdmozu.hcgfyevbuzo.C0042a</div>
<svg style="position:absolute;left:687.82px;top:416.92px" width="8.75" height="8.75" viewBox="0 0 10 10"><path d="M1.6 1.6 L8.4 8.4 M8.4 1.6 L1.6 8.4" stroke="#e8777d" stroke-width="2.7" stroke-linecap="round"/></svg>
<div style="position:absolute;left:703.30px;top:411.60px;width:1px;height:15.60px;background:#dedede"></div></div></div>
<div style="position:absolute;left:181px;top:430px;width:1px;height:400px;background:#b8bcc0"></div>
<div style="position:absolute;left:204px;top:430.6px;width:1.6px;height:400px;background:#8ccb8e"></div>
<div class="cl" style="top:433.60px;left:207.20px;font-size:8.935px;letter-spacing:0.000px"><span style="color:#2020f0">import</span> com.rsjqvjp.pdmozu.VMdquDvS;</div>
<div class="cl" style="top:445.00px;left:207.20px;font-size:8.935px;letter-spacing:0.000px"><span style="color:#2020f0">import</span> com.rsjqvjp.pdmozu.rVJUagawtO;</div>
<div class="cl" style="top:456.40px;left:207.20px;font-size:8.935px;letter-spacing:0.000px"></div>
<div class="cl" style="top:467.80px;left:207.20px;font-size:8.935px;letter-spacing:0.000px"><span style="color:#2020f0">public</span> <span style="color:#2020f0">class</span> vaORBzwkMPce <span style="color:#2020f0">extends</span> BroadcastReceiver <span style="color:#f0506a">{</span></div>
<div class="cl" style="top:479.20px;left:207.20px;font-size:8.935px;letter-spacing:0.000px">    <i style="color:#3a9040">/* renamed from: a */</i></div>
<div class="cl" style="top:490.60px;left:207.20px;font-size:8.935px;letter-spacing:0.000px">    C0041c f437a = <span style="color:#2020f0">new</span> C0041c<span style="color:#f0506a">(</span><span style="color:#f0506a">)</span>;</div>
<div class="cl" style="top:502.00px;left:207.20px;font-size:8.935px;letter-spacing:0.000px"></div>
<div class="cl" style="top:513.40px;left:207.20px;font-size:8.935px;letter-spacing:0.000px">    <i style="color:#3a9040">/* renamed from: a */</i></div>
<div class="cl" style="top:524.80px;left:207.20px;font-size:8.935px;letter-spacing:0.000px">    <span style="color:#2020f0">void</span> mo293a<span style="color:#f0506a">(</span>Context context, Intent intent<span style="color:#f0506a">)</span> <span style="color:#f0506a">{</span></div>
<div class="cl" style="top:536.20px;left:207.20px;font-size:8.935px;letter-spacing:0.000px">        <span style="color:#c39a48">String</span> action = intent.getAction<span style="color:#f0506a">(</span><span style="color:#f0506a">)</span>;</div>
<div class="cl" style="top:547.60px;left:207.20px;font-size:8.935px;letter-spacing:0.000px">        context.startService<span style="color:#f0506a">(</span><span style="color:#2020f0">new</span> Intent<span style="color:#f0506a">(</span>context, LqStNcMIqeV.<span style="color:#2020f0">class</span><span style="color:#f0506a">)</span><span style="color:#f0506a">)</span>;</div>
<div class="cl" style="top:559.00px;left:207.20px;font-size:8.935px;letter-spacing:0.000px">        <span style="color:#c39a48">StringBuilder</span> stringBuilder = <span style="color:#2020f0">new</span> <span style="color:#c39a48">StringBuilder</span><span style="color:#f0506a">(</span><span style="color:#f0506a">)</span>;</div>
<div class="cl" style="top:570.40px;left:207.20px;font-size:8.935px;letter-spacing:0.000px">        stringBuilder.append<span style="color:#f0506a">(</span><span style="color:#dc3cb4">"BOOT Start "</span><span style="color:#f0506a">)</span>;</div>
<div class="cl" style="top:581.80px;left:207.20px;font-size:8.935px;letter-spacing:0.000px">        stringBuilder.append<span style="color:#f0506a">(</span>action<span style="color:#f0506a">)</span>;</div>
<div class="cl" style="top:593.20px;left:207.20px;font-size:8.935px;letter-spacing:0.000px">        <span style="color:#2020f0">this</span>.f437a.mo246a<span style="color:#f0506a">(</span><span style="color:#dc3cb4">"Action"</span>, stringBuilder.toString<span style="color:#f0506a">(</span><span style="color:#f0506a">)</span><span style="color:#f0506a">)</span>;</div>
<div class="cl" style="top:604.60px;left:207.20px;font-size:8.935px;letter-spacing:0.000px">        C0041c c0041c;</div>
<div class="cl" style="top:616.00px;left:207.20px;font-size:8.935px;letter-spacing:0.000px">        <span style="color:#2020f0">try</span> <span style="color:#f0506a">{</span></div>
<div class="cl" style="top:627.40px;left:207.20px;font-size:8.935px;letter-spacing:0.000px">            c0041c = <span style="color:#2020f0">this</span>.f437a;</div>
<div class="cl" style="top:638.80px;left:207.20px;font-size:8.935px;letter-spacing:0.000px">            C0041c.m246a<span style="color:#f0506a">(</span>context, <span style="color:#dc3cb4">"startAlarm"</span>, <span style="color:#f0506a">(</span><span style="color:#3f80a0">long</span><span style="color:#f0506a">)</span> <span style="color:#c39a48">Integer</span>.parseInt<span style="color:#f0506a">(</span><span style="color:#2020f0">this</span>.f437a.mo267e<span style="color:#f0506a">(</span>context<span style="color:#f0506a">)</span><span style="color:#f0506a">)</span><span style="color:#f0506a">)</span>;</div>
<div class="cl" style="top:650.20px;left:207.20px;font-size:8.935px;letter-spacing:0.000px">        <span style="color:#f0506a">}</span> <span style="color:#2020f0">catch</span> <span style="color:#f0506a">(</span><span style="color:#c39a48">Exception</span> unused<span style="color:#f0506a">)</span> <span style="color:#f0506a">{</span></div>
<div class="cl" style="top:661.60px;left:207.20px;font-size:8.935px;letter-spacing:0.000px">            c0041c = <span style="color:#2020f0">this</span>.f437a;</div>
<div class="cl" style="top:673.00px;left:207.20px;font-size:8.935px;letter-spacing:0.000px">            C0041c.m246a<span style="color:#f0506a">(</span>context, <span style="color:#dc3cb4">"startAlarm"</span>, <span style="color:#9a52d8">15000</span><span style="color:#f0506a">)</span>;</div>
<div class="cl" style="top:684.40px;left:207.20px;font-size:8.935px;letter-spacing:0.000px">        <span style="color:#f0506a">}</span></div>
<div class="cl" style="top:695.80px;left:207.20px;font-size:8.935px;letter-spacing:0.000px">        <span style="color:#2020f0">if</span> <span style="color:#f0506a">(</span>action.equals<span style="color:#f0506a">(</span><span style="color:#dc3cb4">"android.intent.action.USER_PRESENT"</span><span style="color:#f0506a">)</span><span style="color:#f0506a">)</span> <span style="color:#f0506a">{</span></div>
<div class="cl" style="top:707.20px;left:207.20px;font-size:8.935px;letter-spacing:0.000px">            context.startService<span style="color:#f0506a">(</span><span style="color:#2020f0">new</span> Intent<span style="color:#f0506a">(</span>context, VMdquDvS.<span style="color:#2020f0">class</span><span style="color:#f0506a">)</span><span style="color:#f0506a">)</span>;</div>
<div class="cl" style="top:718.60px;left:207.20px;font-size:8.935px;letter-spacing:0.000px">        <span style="color:#f0506a">}</span></div>
<div class="cl" style="top:730.00px;left:207.20px;font-size:8.935px;letter-spacing:0.000px">        <span style="color:#2020f0">if</span> <span style="color:#f0506a">(</span>action.equals<span style="color:#f0506a">(</span><span style="color:#dc3cb4">"android.provider.Telephony.SMS_RECEIVED"</span><span style="color:#f0506a">)</span> &amp;&amp; <span style="color:#2020f0">this</span>.f437a.mo267e<span style="color:#f0506a">(</span>context<span style="color:#f0506a">)</span><span style="color:#f0506a">)</span> <span style="color:#f0506a">{</span></div>
<div class="cl" style="top:741.40px;left:207.20px;font-size:8.935px;letter-spacing:0.000px">            mo294b<span style="color:#f0506a">(</span>context, intent<span style="color:#f0506a">)</span>;</div>
<div class="cl" style="top:752.80px;left:207.20px;font-size:8.935px;letter-spacing:0.000px">        <span style="color:#f0506a">}</span></div>
<div class="cl" style="top:764.20px;left:207.20px;font-size:8.935px;letter-spacing:0.000px">    <span style="color:#f0506a">}</span></div>
</div></div>
</body></html>
